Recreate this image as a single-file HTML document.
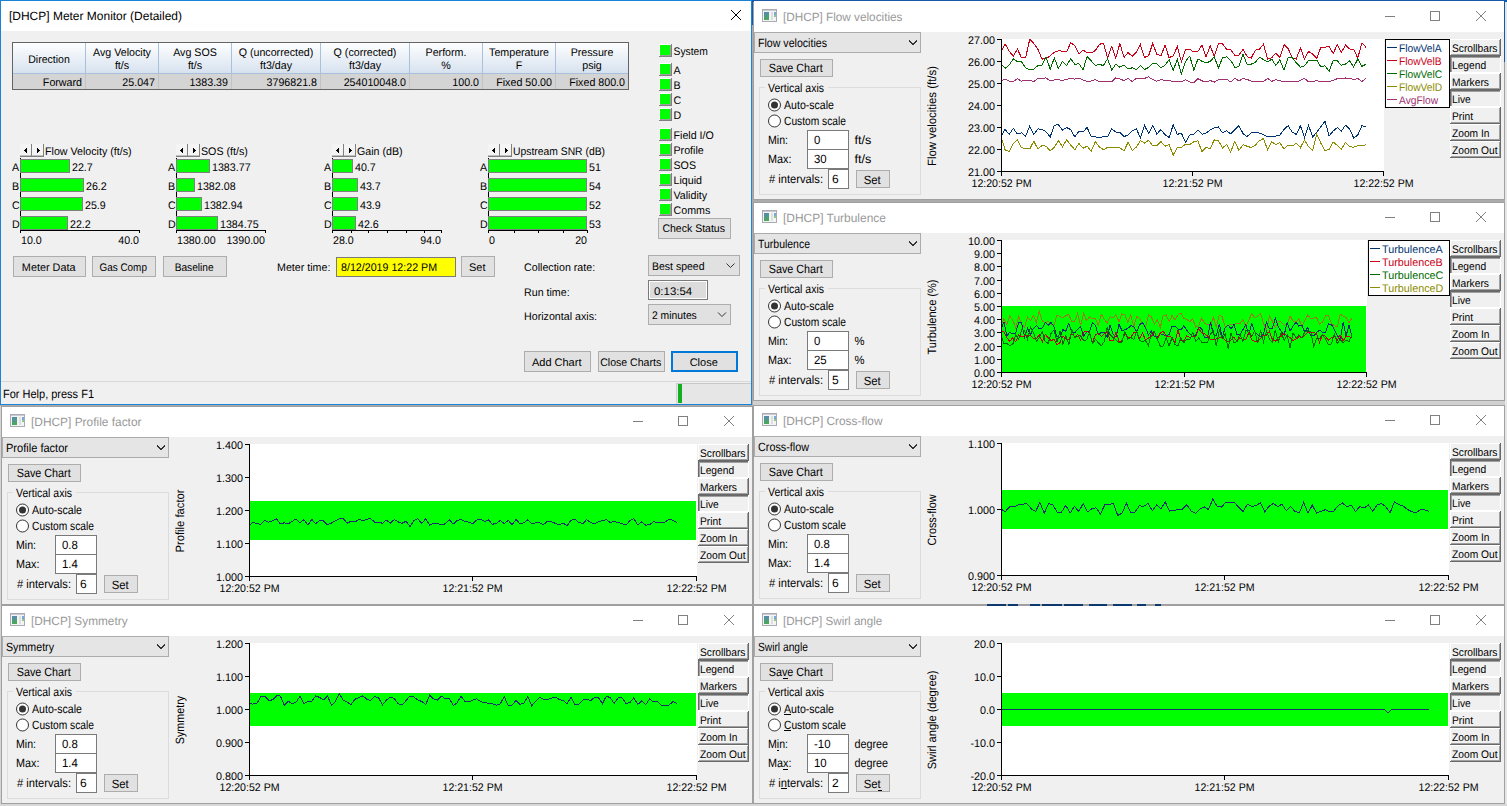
<!DOCTYPE html><html><head><meta charset="utf-8"><style>html,body{margin:0;padding:0;background:#c8c8c8;overflow:hidden}svg{display:block}text{font-family:"Liberation Sans",sans-serif;shape-rendering:auto}</style></head><body><svg width="1507" height="806" viewBox="0 0 1507 806" font-family="Liberation Sans, sans-serif" shape-rendering="crispEdges" text-rendering="geometricPrecision"><rect x="0" y="0" width="1507" height="806" fill="#ababab"/><rect x="1505" y="0" width="2" height="806" fill="#e6e6e6"/><rect x="753" y="401" width="752" height="4" fill="#d0d0d0"/><rect x="753" y="0" width="752" height="200" fill="#a0a0a0"/><rect x="752" y="0" width="755" height="2" fill="#155aa8"/><rect x="752" y="0" width="1" height="25" fill="#155aa8"/><rect x="1504" y="0" width="1" height="62" fill="#155aa8"/><rect x="754" y="1" width="750" height="198" fill="#f0f0f0"/><rect x="754" y="1" width="750" height="31" fill="#ffffff"/><rect x="762" y="9" width="15" height="13" fill="#f4f4f4"/><rect x="762.5" y="9.5" width="14" height="12" fill="none" stroke="#a8acb2" stroke-width="1"/><defs><linearGradient id="ig762_9" x1="0" y1="0" x2="0.3" y2="1"><stop offset="0" stop-color="#5b84bd"/><stop offset="1" stop-color="#4aa85a"/></linearGradient></defs><rect x="764" y="12" width="5" height="8" fill="url(#ig762_9)"/><rect x="771" y="12" width="2" height="8" fill="#dedede"/><rect x="774" y="12" width="2" height="3" fill="#7aa8d8"/><rect x="774" y="15" width="2" height="2" fill="#8cc88c"/><rect x="763" y="10" width="13" height="1" fill="#c8ccd2"/><text x="783" y="21" font-size="12" fill="#999999" text-anchor="start" textLength="119.4" lengthAdjust="spacingAndGlyphs">[DHCP] Flow velocities</text><rect x="1385" y="16" width="10" height="1" fill="#808080"/><rect x="1430.5" y="11.5" width="9" height="9" fill="none" stroke="#808080" stroke-width="1"/><path d="M1476 11 L1486 21 M1486 11 L1476 21" stroke="#808080" stroke-width="1" fill="none" shape-rendering="auto"/><rect x="754" y="32" width="167" height="21" fill="#e5e5e5"/><rect x="754.5" y="32.5" width="166" height="20" fill="none" stroke="#acacac" stroke-width="1"/><text x="758" y="47" font-size="12" fill="#000" text-anchor="start" textLength="69" lengthAdjust="spacingAndGlyphs">Flow velocities</text><path d="M909 40.5 L913 44.5 L917 40.5" fill="none" stroke="#333" stroke-width="1"/><rect x="760" y="59" width="73" height="18" fill="#e1e1e1"/><rect x="760.5" y="59.5" width="72" height="17" fill="none" stroke="#adadad" stroke-width="1"/><text x="795.7" y="72" font-size="12" fill="#000" text-anchor="middle" textLength="54" lengthAdjust="spacingAndGlyphs">Save Chart</text><rect x="759.5" y="87.5" width="161" height="107" fill="none" stroke="#dcdcdc" stroke-width="1"/><rect x="765" y="82" width="63" height="10" fill="#f0f0f0"/><text x="768" y="92" font-size="12" fill="#000" text-anchor="start" textLength="56" lengthAdjust="spacingAndGlyphs">Vertical axis</text><circle cx="774.5" cy="105" r="6" fill="#fff" stroke="#333" stroke-width="1" shape-rendering="auto"/><circle cx="774.5" cy="105" r="3.5" fill="#333" shape-rendering="auto"/><text x="784" y="108.5" font-size="12" fill="#000" text-anchor="start" textLength="50" lengthAdjust="spacingAndGlyphs">Auto-scale</text><circle cx="774.5" cy="121" r="6" fill="#fff" stroke="#333" stroke-width="1" shape-rendering="auto"/><text x="784" y="124.5" font-size="12" fill="#000" text-anchor="start" textLength="62" lengthAdjust="spacingAndGlyphs">Custom scale</text><text x="768" y="144" font-size="12" fill="#000" text-anchor="start" textLength="20" lengthAdjust="spacingAndGlyphs">Min:</text><text x="768" y="163" font-size="12" fill="#000" text-anchor="start" textLength="23.4" lengthAdjust="spacingAndGlyphs">Max:</text><rect x="807" y="130" width="42" height="20" fill="#fff"/><rect x="807.5" y="130.5" width="41" height="19" fill="none" stroke="#7a7a7a" stroke-width="1"/><rect x="807" y="149" width="42" height="20" fill="#fff"/><rect x="807.5" y="149.5" width="41" height="19" fill="none" stroke="#7a7a7a" stroke-width="1"/><text x="814" y="144" font-size="12" fill="#000" text-anchor="start" textLength="6.339765625" lengthAdjust="spacingAndGlyphs">0</text><text x="814" y="163" font-size="12" fill="#000" text-anchor="start" textLength="12.67953125" lengthAdjust="spacingAndGlyphs">30</text><text x="854.5" y="144" font-size="12" fill="#000" text-anchor="start" textLength="16.9" lengthAdjust="spacingAndGlyphs">ft/s</text><text x="854.5" y="163" font-size="12" fill="#000" text-anchor="start" textLength="16.9" lengthAdjust="spacingAndGlyphs">ft/s</text><text x="769" y="182.5" font-size="12" fill="#000" text-anchor="start" textLength="54" lengthAdjust="spacingAndGlyphs"># intervals:</text><rect x="828" y="169" width="21" height="20" fill="#fff"/><rect x="828.5" y="169.5" width="20" height="19" fill="none" stroke="#7a7a7a" stroke-width="1"/><text x="832" y="183" font-size="12" fill="#000" text-anchor="start">6</text><rect x="856" y="170" width="34" height="18" fill="#e1e1e1"/><rect x="856.5" y="170.5" width="33" height="17" fill="none" stroke="#adadad" stroke-width="1"/><text x="872.2" y="183.5" font-size="12" fill="#000" text-anchor="middle" textLength="17" lengthAdjust="spacingAndGlyphs">Set</text><text x="0" y="0" font-size="12" fill="#000" text-anchor="middle" textLength="100" lengthAdjust="spacingAndGlyphs" transform="translate(935.5,116) rotate(-90)">Flow velocities (ft/s)</text><rect x="1001" y="39" width="383" height="132" fill="#ffffff"/><rect x="997" y="39" width="4" height="1" fill="#000"/><text x="995" y="44" font-size="11" fill="#000" text-anchor="end" textLength="26.9745" lengthAdjust="spacingAndGlyphs">27.00</text><rect x="997" y="61" width="4" height="1" fill="#000"/><text x="995" y="66" font-size="11" fill="#000" text-anchor="end" textLength="26.9745" lengthAdjust="spacingAndGlyphs">26.00</text><rect x="997" y="83" width="4" height="1" fill="#000"/><text x="995" y="88" font-size="11" fill="#000" text-anchor="end" textLength="26.9745" lengthAdjust="spacingAndGlyphs">25.00</text><rect x="997" y="105" width="4" height="1" fill="#000"/><text x="995" y="110" font-size="11" fill="#000" text-anchor="end" textLength="26.9745" lengthAdjust="spacingAndGlyphs">24.00</text><rect x="997" y="127" width="4" height="1" fill="#000"/><text x="995" y="132" font-size="11" fill="#000" text-anchor="end" textLength="26.9745" lengthAdjust="spacingAndGlyphs">23.00</text><rect x="997" y="149" width="4" height="1" fill="#000"/><text x="995" y="154" font-size="11" fill="#000" text-anchor="end" textLength="26.9745" lengthAdjust="spacingAndGlyphs">22.00</text><rect x="997" y="171" width="4" height="1" fill="#000"/><text x="995" y="176" font-size="11" fill="#000" text-anchor="end" textLength="26.9745" lengthAdjust="spacingAndGlyphs">21.00</text><polyline points="1001.0,51.9 1005.1,44.1 1009.2,51.0 1013.3,56.3 1017.4,49.0 1021.5,57.8 1025.6,57.9 1029.7,39.4 1033.8,43.4 1037.9,49.2 1042.0,59.1 1046.1,58.4 1050.2,56.0 1054.3,52.1 1058.4,50.8 1062.5,51.1 1066.6,51.8 1070.7,42.9 1074.8,45.5 1078.9,54.1 1083.0,49.9 1087.1,52.7 1091.2,53.0 1095.3,50.5 1099.4,44.3 1103.5,43.2 1107.6,58.1 1111.7,46.5 1115.8,57.9 1119.9,43.4 1124.0,57.4 1128.1,52.5 1132.2,56.4 1136.3,52.0 1140.4,44.7 1144.5,57.4 1148.6,55.8 1152.7,43.3 1156.8,54.3 1160.9,55.9 1165.0,45.3 1169.1,57.7 1173.2,55.8 1177.3,46.6 1181.4,61.7 1185.6,49.7 1189.7,49.4 1193.8,51.9 1197.9,51.4 1202.0,45.1 1206.1,56.8 1210.2,45.9 1214.3,56.2 1218.4,43.8 1222.5,43.7 1226.6,49.4 1230.7,49.5 1234.8,55.4 1238.9,55.1 1243.0,49.5 1247.1,56.5 1251.2,58.2 1255.3,50.1 1259.4,49.2 1263.5,44.2 1267.6,59.1 1271.7,57.7 1275.8,53.3 1279.9,57.2 1284.0,44.6 1288.1,48.5 1292.2,57.9 1296.3,59.1 1300.4,47.8 1304.5,59.0 1308.6,51.4 1312.7,54.1 1316.8,58.1 1320.9,47.2 1325.0,47.2 1329.1,46.3 1333.2,53.5 1337.3,44.5 1341.4,52.5 1345.5,45.1 1349.6,49.0 1353.7,49.7 1357.8,58.0 1361.9,43.0 1366.0,47.3" fill="none" stroke="#c80018" stroke-width="1" stroke-linejoin="miter"/><polyline points="1001.0,63.6 1005.1,68.4 1009.2,65.0 1013.3,58.8 1017.4,61.7 1021.5,61.8 1025.6,68.0 1029.7,69.5 1033.8,69.3 1037.9,65.5 1042.0,65.1 1046.1,57.3 1050.2,69.0 1054.3,58.0 1058.4,68.4 1062.5,61.5 1066.6,65.4 1070.7,58.7 1074.8,64.4 1078.9,63.5 1083.0,69.9 1087.1,56.5 1091.2,60.9 1095.3,65.2 1099.4,64.8 1103.5,65.2 1107.6,58.8 1111.7,69.9 1115.8,64.2 1119.9,67.2 1124.0,64.8 1128.1,68.9 1132.2,67.8 1136.3,69.8 1140.4,65.4 1144.5,69.6 1148.6,67.4 1152.7,63.5 1156.8,63.5 1160.9,68.0 1165.0,65.1 1169.1,59.6 1173.2,70.3 1177.3,59.3 1181.4,74.0 1185.6,61.5 1189.7,56.1 1193.8,70.0 1197.9,59.1 1202.0,61.2 1206.1,62.8 1210.2,61.4 1214.3,56.8 1218.4,68.0 1222.5,57.9 1226.6,56.9 1230.7,60.4 1234.8,67.3 1238.9,66.7 1243.0,54.5 1247.1,64.3 1251.2,64.1 1255.3,62.3 1259.4,57.2 1263.5,59.5 1267.6,61.9 1271.7,59.1 1275.8,65.4 1279.9,59.8 1284.0,70.1 1288.1,57.4 1292.2,57.5 1296.3,62.7 1300.4,67.2 1304.5,65.9 1308.6,60.5 1312.7,60.9 1316.8,60.3 1320.9,66.8 1325.0,65.7 1329.1,71.2 1333.2,60.4 1337.3,60.9 1341.4,65.3 1345.5,64.0 1349.6,60.8 1353.7,66.9 1357.8,59.0 1361.9,66.4 1366.0,64.2" fill="none" stroke="#006a00" stroke-width="1" stroke-linejoin="miter"/><polyline points="1001.0,81.0 1005.1,79.1 1009.2,81.3 1013.3,81.5 1017.4,78.8 1021.5,81.2 1025.6,80.2 1029.7,80.4 1033.8,81.5 1037.9,78.6 1042.0,78.5 1046.1,77.9 1050.2,81.0 1054.3,80.0 1058.4,79.6 1062.5,80.5 1066.6,79.3 1070.7,78.6 1074.8,79.1 1078.9,78.0 1083.0,80.2 1087.1,81.2 1091.2,81.0 1095.3,79.5 1099.4,81.5 1103.5,81.1 1107.6,81.3 1111.7,81.8 1115.8,77.9 1119.9,79.0 1124.0,80.6 1128.1,78.4 1132.2,81.4 1136.3,78.3 1140.4,78.6 1144.5,78.4 1148.6,76.9 1152.7,79.5 1156.8,81.2 1160.9,79.6 1165.0,80.5 1169.1,80.6 1173.2,81.4 1177.3,81.6 1181.4,81.8 1185.6,79.7 1189.7,81.9 1193.8,82.8 1197.9,78.6 1202.0,80.9 1206.1,81.8 1210.2,80.5 1214.3,82.1 1218.4,79.9 1222.5,79.8 1226.6,79.2 1230.7,82.0 1234.8,78.1 1238.9,81.0 1243.0,78.4 1247.1,79.5 1251.2,81.0 1255.3,81.2 1259.4,82.0 1263.5,81.7 1267.6,78.3 1271.7,81.3 1275.8,79.7 1279.9,80.8 1284.0,81.5 1288.1,81.6 1292.2,81.2 1296.3,82.0 1300.4,80.5 1304.5,78.3 1308.6,81.9 1312.7,81.6 1316.8,80.7 1320.9,81.9 1325.0,81.0 1329.1,81.5 1333.2,80.5 1337.3,78.6 1341.4,79.0 1345.5,78.0 1349.6,78.1 1353.7,79.6 1357.8,78.4 1361.9,81.5 1366.0,78.5" fill="none" stroke="#a03070" stroke-width="1" stroke-linejoin="miter"/><polyline points="1001.0,136.6 1005.1,129.4 1009.2,134.4 1013.3,128.3 1017.4,134.0 1021.5,132.8 1025.6,136.4 1029.7,126.1 1033.8,134.6 1037.9,128.9 1042.0,129.2 1046.1,131.9 1050.2,136.9 1054.3,125.1 1058.4,124.9 1062.5,130.0 1066.6,127.6 1070.7,129.6 1074.8,136.8 1078.9,131.2 1083.0,132.0 1087.1,127.5 1091.2,136.6 1095.3,136.8 1099.4,137.6 1103.5,136.5 1107.6,136.8 1111.7,129.0 1115.8,132.0 1119.9,132.2 1124.0,136.7 1128.1,134.9 1132.2,131.1 1136.3,128.7 1140.4,137.7 1144.5,125.5 1148.6,133.4 1152.7,125.6 1156.8,134.0 1160.9,129.7 1165.0,134.6 1169.1,137.5 1173.2,125.0 1177.3,134.3 1181.4,133.3 1185.6,142.2 1189.7,135.0 1193.8,134.5 1197.9,130.0 1202.0,134.2 1206.1,133.1 1210.2,130.1 1214.3,128.0 1218.4,126.9 1222.5,132.9 1226.6,130.8 1230.7,133.8 1234.8,129.9 1238.9,125.7 1243.0,133.5 1247.1,136.6 1251.2,132.6 1255.3,132.1 1259.4,133.0 1263.5,134.6 1267.6,136.7 1271.7,136.1 1275.8,136.1 1279.9,135.1 1284.0,129.3 1288.1,125.7 1292.2,132.1 1296.3,134.5 1300.4,125.7 1304.5,137.2 1308.6,125.7 1312.7,136.7 1316.8,132.4 1320.9,126.5 1325.0,121.2 1329.1,135.8 1333.2,131.0 1337.3,127.6 1341.4,131.0 1345.5,125.2 1349.6,129.0 1353.7,138.0 1357.8,134.9 1361.9,125.7 1366.0,126.7" fill="none" stroke="#003370" stroke-width="1" stroke-linejoin="miter"/><polyline points="1001.0,137.0 1005.1,149.8 1009.2,151.5 1013.3,143.5 1017.4,139.7 1021.5,147.7 1025.6,148.4 1029.7,149.0 1033.8,141.2 1037.9,149.0 1042.0,145.6 1046.1,146.2 1050.2,150.8 1054.3,147.4 1058.4,140.5 1062.5,146.8 1066.6,139.7 1070.7,145.1 1074.8,149.7 1078.9,143.4 1083.0,148.3 1087.1,146.1 1091.2,151.2 1095.3,141.6 1099.4,146.9 1103.5,149.6 1107.6,147.5 1111.7,148.0 1115.8,147.9 1119.9,147.7 1124.0,150.9 1128.1,142.1 1132.2,150.4 1136.3,147.2 1140.4,140.5 1144.5,143.1 1148.6,140.3 1152.7,145.7 1156.8,145.7 1160.9,141.5 1165.0,146.2 1169.1,144.6 1173.2,155.1 1177.3,147.7 1181.4,147.2 1185.6,144.3 1189.7,144.5 1193.8,141.8 1197.9,140.9 1202.0,151.6 1206.1,147.5 1210.2,148.8 1214.3,139.8 1218.4,140.7 1222.5,147.9 1226.6,144.4 1230.7,152.0 1234.8,141.3 1238.9,150.4 1243.0,144.8 1247.1,146.2 1251.2,147.6 1255.3,145.1 1259.4,140.8 1263.5,138.5 1267.6,149.9 1271.7,141.6 1275.8,144.7 1279.9,142.7 1284.0,148.9 1288.1,145.1 1292.2,146.1 1296.3,143.2 1300.4,147.7 1304.5,139.8 1308.6,146.8 1312.7,150.2 1316.8,134.2 1320.9,143.3 1325.0,150.5 1329.1,149.3 1333.2,142.1 1337.3,145.3 1341.4,149.0 1345.5,142.4 1349.6,146.7 1353.7,147.2 1357.8,145.7 1361.9,146.0 1366.0,144.5" fill="none" stroke="#8c8c00" stroke-width="1" stroke-linejoin="miter"/><rect x="1001" y="39" width="1" height="137" fill="#000"/><rect x="1001" y="171" width="383" height="1" fill="#000"/><rect x="1192" y="171" width="1" height="5" fill="#000"/><rect x="1383" y="171" width="1" height="5" fill="#000"/><text x="1001.5" y="187" font-size="11" fill="#000" text-anchor="middle" textLength="60" lengthAdjust="spacingAndGlyphs">12:20:52 PM</text><text x="1192.5" y="187" font-size="11" fill="#000" text-anchor="middle" textLength="60" lengthAdjust="spacingAndGlyphs">12:21:52 PM</text><text x="1383.5" y="187" font-size="11" fill="#000" text-anchor="middle" textLength="60" lengthAdjust="spacingAndGlyphs">12:22:52 PM</text><rect x="1385" y="39" width="65" height="69" fill="#ffffff"/><rect x="1385.5" y="39.5" width="64" height="68" fill="none" stroke="#000" stroke-width="1"/><rect x="1387" y="47" width="10" height="1" fill="#003370"/><text x="1399" y="51.5" font-size="11" fill="#003370" text-anchor="start" textLength="42.64340625" lengthAdjust="spacingAndGlyphs">FlowVelA</text><rect x="1387" y="60" width="10" height="1" fill="#c80018"/><text x="1399" y="64.5" font-size="11" fill="#c80018" text-anchor="start" textLength="42.64340625" lengthAdjust="spacingAndGlyphs">FlowVelB</text><rect x="1387" y="73" width="10" height="1" fill="#006a00"/><text x="1399" y="77.5" font-size="11" fill="#006a00" text-anchor="start" textLength="43.20721875" lengthAdjust="spacingAndGlyphs">FlowVelC</text><rect x="1387" y="86" width="10" height="1" fill="#8c8c00"/><text x="1399" y="90.5" font-size="11" fill="#8c8c00" text-anchor="start" textLength="43.20721875" lengthAdjust="spacingAndGlyphs">FlowVelD</text><rect x="1387" y="99" width="10" height="1" fill="#a03070"/><text x="1399" y="103.5" font-size="11" fill="#a03070" text-anchor="start" textLength="39.041109375" lengthAdjust="spacingAndGlyphs">AvgFlow</text><rect x="1450" y="39" width="51" height="17" fill="#f0f0f0"/><rect x="1450" y="39" width="51" height="1" fill="#ffffff"/><rect x="1450" y="39" width="1" height="17" fill="#ffffff"/><rect x="1450" y="55" width="51" height="1" fill="#696969"/><rect x="1500" y="39" width="1" height="17" fill="#696969"/><rect x="1451" y="54" width="49" height="1" fill="#a0a0a0"/><rect x="1499" y="40" width="1" height="15" fill="#a0a0a0"/><text x="1452" y="51.5" font-size="11" fill="#000" text-anchor="start" textLength="45.478453125" lengthAdjust="spacingAndGlyphs">Scrollbars</text><rect x="1450" y="56" width="51" height="17" fill="#f0f0f0"/><rect x="1450" y="56" width="51" height="1" fill="#696969"/><rect x="1450" y="56" width="1" height="17" fill="#696969"/><rect x="1451" y="57" width="49" height="1" fill="#a0a0a0"/><rect x="1451" y="57" width="1" height="15" fill="#a0a0a0"/><rect x="1450" y="72" width="51" height="1" fill="#ffffff"/><rect x="1500" y="56" width="1" height="17" fill="#ffffff"/><text x="1452" y="68.5" font-size="11" fill="#000" text-anchor="start" textLength="34.13390625" lengthAdjust="spacingAndGlyphs">Legend</text><rect x="1450" y="73" width="51" height="17" fill="#f0f0f0"/><rect x="1450" y="73" width="51" height="1" fill="#ffffff"/><rect x="1450" y="73" width="1" height="17" fill="#ffffff"/><rect x="1450" y="89" width="51" height="1" fill="#696969"/><rect x="1500" y="73" width="1" height="17" fill="#696969"/><rect x="1451" y="88" width="49" height="1" fill="#a0a0a0"/><rect x="1499" y="74" width="1" height="15" fill="#a0a0a0"/><text x="1452" y="85.5" font-size="11" fill="#000" text-anchor="start" textLength="36.94134375" lengthAdjust="spacingAndGlyphs">Markers</text><rect x="1450" y="90" width="51" height="17" fill="#f0f0f0"/><rect x="1450" y="90" width="51" height="1" fill="#696969"/><rect x="1450" y="90" width="1" height="17" fill="#696969"/><rect x="1451" y="91" width="49" height="1" fill="#a0a0a0"/><rect x="1451" y="91" width="1" height="15" fill="#a0a0a0"/><rect x="1450" y="106" width="51" height="1" fill="#ffffff"/><rect x="1500" y="90" width="1" height="17" fill="#ffffff"/><text x="1452" y="102.5" font-size="11" fill="#000" text-anchor="start" textLength="18.765656250000003" lengthAdjust="spacingAndGlyphs">Live</text><rect x="1450" y="107" width="51" height="17" fill="#f0f0f0"/><rect x="1450" y="107" width="51" height="1" fill="#ffffff"/><rect x="1450" y="107" width="1" height="17" fill="#ffffff"/><rect x="1450" y="123" width="51" height="1" fill="#696969"/><rect x="1500" y="107" width="1" height="17" fill="#696969"/><rect x="1451" y="122" width="49" height="1" fill="#a0a0a0"/><rect x="1499" y="108" width="1" height="15" fill="#a0a0a0"/><text x="1452" y="119.5" font-size="11" fill="#000" text-anchor="start" textLength="21.033984375000003" lengthAdjust="spacingAndGlyphs">Print</text><rect x="1450" y="124" width="51" height="17" fill="#f0f0f0"/><rect x="1450" y="124" width="51" height="1" fill="#ffffff"/><rect x="1450" y="124" width="1" height="17" fill="#ffffff"/><rect x="1450" y="140" width="51" height="1" fill="#696969"/><rect x="1500" y="124" width="1" height="17" fill="#696969"/><rect x="1451" y="139" width="49" height="1" fill="#a0a0a0"/><rect x="1499" y="125" width="1" height="15" fill="#a0a0a0"/><text x="1452" y="136.5" font-size="11" fill="#000" text-anchor="start" textLength="37.521140625" lengthAdjust="spacingAndGlyphs">Zoom In</text><rect x="1450" y="141" width="51" height="17" fill="#f0f0f0"/><rect x="1450" y="141" width="51" height="1" fill="#ffffff"/><rect x="1450" y="141" width="1" height="17" fill="#ffffff"/><rect x="1450" y="157" width="51" height="1" fill="#696969"/><rect x="1500" y="141" width="1" height="17" fill="#696969"/><rect x="1451" y="156" width="49" height="1" fill="#a0a0a0"/><rect x="1499" y="142" width="1" height="15" fill="#a0a0a0"/><text x="1452" y="153.5" font-size="11" fill="#000" text-anchor="start" textLength="45.478453125" lengthAdjust="spacingAndGlyphs">Zoom Out</text><rect x="753" y="202" width="752" height="199" fill="#a0a0a0"/><rect x="754" y="203" width="750" height="197" fill="#f0f0f0"/><rect x="754" y="203" width="750" height="30" fill="#ffffff"/><rect x="762" y="210" width="15" height="13" fill="#f4f4f4"/><rect x="762.5" y="210.5" width="14" height="12" fill="none" stroke="#a8acb2" stroke-width="1"/><defs><linearGradient id="ig762_210" x1="0" y1="0" x2="0.3" y2="1"><stop offset="0" stop-color="#5b84bd"/><stop offset="1" stop-color="#4aa85a"/></linearGradient></defs><rect x="764" y="213" width="5" height="8" fill="url(#ig762_210)"/><rect x="771" y="213" width="2" height="8" fill="#dedede"/><rect x="774" y="213" width="2" height="3" fill="#7aa8d8"/><rect x="774" y="216" width="2" height="2" fill="#8cc88c"/><rect x="763" y="211" width="13" height="1" fill="#c8ccd2"/><text x="783" y="222" font-size="12" fill="#999999" text-anchor="start" textLength="102.9" lengthAdjust="spacingAndGlyphs">[DHCP] Turbulence</text><rect x="1385" y="217" width="10" height="1" fill="#808080"/><rect x="1430.5" y="212.5" width="9" height="9" fill="none" stroke="#808080" stroke-width="1"/><path d="M1476 212 L1486 222 M1486 212 L1476 222" stroke="#808080" stroke-width="1" fill="none" shape-rendering="auto"/><rect x="754" y="233" width="167" height="21" fill="#e5e5e5"/><rect x="754.5" y="233.5" width="166" height="20" fill="none" stroke="#acacac" stroke-width="1"/><text x="758" y="248" font-size="12" fill="#000" text-anchor="start" textLength="52" lengthAdjust="spacingAndGlyphs">Turbulence</text><path d="M909 241.5 L913 245.5 L917 241.5" fill="none" stroke="#333" stroke-width="1"/><rect x="760" y="260" width="73" height="18" fill="#e1e1e1"/><rect x="760.5" y="260.5" width="72" height="17" fill="none" stroke="#adadad" stroke-width="1"/><text x="795.7" y="273" font-size="12" fill="#000" text-anchor="middle" textLength="54" lengthAdjust="spacingAndGlyphs">Save Chart</text><rect x="759.5" y="288.5" width="161" height="107" fill="none" stroke="#dcdcdc" stroke-width="1"/><rect x="765" y="283" width="63" height="10" fill="#f0f0f0"/><text x="768" y="293" font-size="12" fill="#000" text-anchor="start" textLength="56" lengthAdjust="spacingAndGlyphs">Vertical axis</text><circle cx="774.5" cy="306" r="6" fill="#fff" stroke="#333" stroke-width="1" shape-rendering="auto"/><circle cx="774.5" cy="306" r="3.5" fill="#333" shape-rendering="auto"/><text x="784" y="309.5" font-size="12" fill="#000" text-anchor="start" textLength="50" lengthAdjust="spacingAndGlyphs">Auto-scale</text><circle cx="774.5" cy="322" r="6" fill="#fff" stroke="#333" stroke-width="1" shape-rendering="auto"/><text x="784" y="325.5" font-size="12" fill="#000" text-anchor="start" textLength="62" lengthAdjust="spacingAndGlyphs">Custom scale</text><text x="768" y="345" font-size="12" fill="#000" text-anchor="start" textLength="20" lengthAdjust="spacingAndGlyphs">Min:</text><text x="768" y="364" font-size="12" fill="#000" text-anchor="start" textLength="23.4" lengthAdjust="spacingAndGlyphs">Max:</text><rect x="807" y="331" width="42" height="20" fill="#fff"/><rect x="807.5" y="331.5" width="41" height="19" fill="none" stroke="#7a7a7a" stroke-width="1"/><rect x="807" y="350" width="42" height="20" fill="#fff"/><rect x="807.5" y="350.5" width="41" height="19" fill="none" stroke="#7a7a7a" stroke-width="1"/><text x="814" y="345" font-size="12" fill="#000" text-anchor="start" textLength="6.339765625" lengthAdjust="spacingAndGlyphs">0</text><text x="814" y="364" font-size="12" fill="#000" text-anchor="start" textLength="12.67953125" lengthAdjust="spacingAndGlyphs">25</text><text x="854.5" y="345" font-size="12" fill="#000" text-anchor="start" textLength="10" lengthAdjust="spacingAndGlyphs">%</text><text x="854.5" y="364" font-size="12" fill="#000" text-anchor="start" textLength="10" lengthAdjust="spacingAndGlyphs">%</text><text x="769" y="383.5" font-size="12" fill="#000" text-anchor="start" textLength="54" lengthAdjust="spacingAndGlyphs"># intervals:</text><rect x="828" y="370" width="21" height="20" fill="#fff"/><rect x="828.5" y="370.5" width="20" height="19" fill="none" stroke="#7a7a7a" stroke-width="1"/><text x="832" y="384" font-size="12" fill="#000" text-anchor="start">5</text><rect x="856" y="371" width="34" height="18" fill="#e1e1e1"/><rect x="856.5" y="371.5" width="33" height="17" fill="none" stroke="#adadad" stroke-width="1"/><text x="872.2" y="384.5" font-size="12" fill="#000" text-anchor="middle" textLength="17" lengthAdjust="spacingAndGlyphs">Set</text><text x="0" y="0" font-size="12" fill="#000" text-anchor="middle" textLength="75" lengthAdjust="spacingAndGlyphs" transform="translate(935.5,317) rotate(-90)">Turbulence (%)</text><rect x="1001" y="240" width="366" height="132" fill="#ffffff"/><rect x="1001" y="306" width="365" height="66" fill="#00ff00"/><rect x="997" y="240" width="4" height="1" fill="#000"/><text x="995" y="245" font-size="11" fill="#000" text-anchor="end" textLength="26.9745" lengthAdjust="spacingAndGlyphs">10.00</text><rect x="997" y="253" width="4" height="1" fill="#000"/><text x="995" y="258" font-size="11" fill="#000" text-anchor="end" textLength="20.979656249999998" lengthAdjust="spacingAndGlyphs">9.00</text><rect x="997" y="266" width="4" height="1" fill="#000"/><text x="995" y="271" font-size="11" fill="#000" text-anchor="end" textLength="20.979656249999998" lengthAdjust="spacingAndGlyphs">8.00</text><rect x="997" y="280" width="4" height="1" fill="#000"/><text x="995" y="285" font-size="11" fill="#000" text-anchor="end" textLength="20.979656249999998" lengthAdjust="spacingAndGlyphs">7.00</text><rect x="997" y="293" width="4" height="1" fill="#000"/><text x="995" y="298" font-size="11" fill="#000" text-anchor="end" textLength="20.979656249999998" lengthAdjust="spacingAndGlyphs">6.00</text><rect x="997" y="306" width="4" height="1" fill="#000"/><text x="995" y="311" font-size="11" fill="#000" text-anchor="end" textLength="20.979656249999998" lengthAdjust="spacingAndGlyphs">5.00</text><rect x="997" y="319" width="4" height="1" fill="#000"/><text x="995" y="324" font-size="11" fill="#000" text-anchor="end" textLength="20.979656249999998" lengthAdjust="spacingAndGlyphs">4.00</text><rect x="997" y="332" width="4" height="1" fill="#000"/><text x="995" y="337" font-size="11" fill="#000" text-anchor="end" textLength="20.979656249999998" lengthAdjust="spacingAndGlyphs">3.00</text><rect x="997" y="346" width="4" height="1" fill="#000"/><text x="995" y="351" font-size="11" fill="#000" text-anchor="end" textLength="20.979656249999998" lengthAdjust="spacingAndGlyphs">2.00</text><rect x="997" y="359" width="4" height="1" fill="#000"/><text x="995" y="364" font-size="11" fill="#000" text-anchor="end" textLength="20.979656249999998" lengthAdjust="spacingAndGlyphs">1.00</text><rect x="997" y="372" width="4" height="1" fill="#000"/><text x="995" y="377" font-size="11" fill="#000" text-anchor="end" textLength="20.979656249999998" lengthAdjust="spacingAndGlyphs">0.00</text><polyline points="1001.0,325.4 1003.9,318.6 1006.9,324.6 1009.8,316.0 1012.8,320.4 1015.7,327.7 1018.7,316.2 1021.6,324.4 1024.6,327.2 1027.5,317.1 1030.5,320.6 1033.4,315.8 1036.4,322.4 1039.3,311.4 1042.3,321.2 1045.2,322.8 1048.2,321.2 1051.1,324.4 1054.1,324.8 1057.0,314.8 1060.0,316.7 1062.9,317.4 1065.9,315.8 1068.8,314.4 1071.8,321.8 1074.7,321.2 1077.7,313.3 1080.6,325.1 1083.6,313.4 1086.5,320.6 1089.5,316.9 1092.4,318.9 1095.4,318.7 1098.3,325.3 1101.3,314.3 1104.2,319.1 1107.2,323.0 1110.1,316.5 1113.1,317.9 1116.0,314.7 1119.0,321.9 1121.9,313.8 1124.9,315.0 1127.8,322.3 1130.8,315.1 1133.7,326.8 1136.7,316.5 1139.6,318.2 1142.6,323.6 1145.5,327.0 1148.5,314.7 1151.4,317.0 1154.4,324.1 1157.3,320.1 1160.3,327.4 1163.2,315.6 1166.2,315.0 1169.1,321.6 1172.1,315.4 1175.0,320.0 1178.0,314.7 1180.9,312.9 1183.9,318.4 1186.8,319.3 1189.8,321.9 1192.7,318.9 1195.7,327.0 1198.6,325.7 1201.6,317.9 1204.5,323.1 1207.5,324.6 1210.4,325.1 1213.4,317.5 1216.3,327.1 1219.3,315.1 1222.2,316.7 1225.2,326.9 1228.1,325.2 1231.1,324.1 1234.0,324.4 1237.0,323.3 1239.9,323.5 1242.9,319.8 1245.8,326.3 1248.8,320.4 1251.7,313.7 1254.7,317.6 1257.6,316.3 1260.6,313.6 1263.5,323.2 1266.5,330.7 1269.4,316.0 1272.4,321.3 1275.3,327.5 1278.3,321.4 1281.2,322.1 1284.2,325.2 1287.1,324.2 1290.1,315.9 1293.0,321.2 1296.0,322.2 1298.9,318.6 1301.9,326.5 1304.8,320.6 1307.8,314.9 1310.7,318.7 1313.7,318.1 1316.6,317.6 1319.6,324.2 1322.5,322.2 1325.5,315.8 1328.4,315.4 1331.4,323.3 1334.3,325.7 1337.3,326.6 1340.2,314.1 1343.2,316.3 1346.1,317.6 1349.1,322.9 1352.0,317.9" fill="none" stroke="#9a7a1a" stroke-width="1" stroke-linejoin="miter"/><polyline points="1001.0,330.0 1003.9,321.9 1006.9,335.8 1009.8,332.2 1012.8,334.0 1015.7,332.6 1018.7,322.9 1021.6,323.0 1024.6,336.9 1027.5,328.3 1030.5,334.7 1033.4,328.4 1036.4,325.4 1039.3,328.7 1042.3,328.0 1045.2,322.5 1048.2,325.3 1051.1,322.2 1054.1,327.1 1057.0,336.9 1060.0,337.2 1062.9,329.7 1065.9,331.2 1068.8,323.2 1071.8,331.8 1074.7,333.0 1077.7,329.1 1080.6,327.0 1083.6,336.3 1086.5,332.0 1089.5,331.3 1092.4,322.6 1095.4,325.1 1098.3,335.0 1101.3,332.1 1104.2,332.0 1107.2,337.1 1110.1,325.1 1113.1,334.5 1116.0,336.9 1119.0,324.6 1121.9,330.4 1124.9,329.8 1127.8,328.4 1130.8,325.9 1133.7,326.2 1136.7,332.1 1139.6,324.7 1142.6,322.7 1145.5,327.6 1148.5,335.0 1151.4,330.8 1154.4,337.0 1157.3,336.6 1160.3,333.6 1163.2,334.8 1166.2,336.1 1169.1,334.4 1172.1,326.0 1175.0,326.4 1178.0,328.9 1180.9,329.9 1183.9,325.8 1186.8,330.3 1189.8,334.0 1192.7,336.6 1195.7,335.2 1198.6,327.5 1201.6,328.3 1204.5,337.2 1207.5,337.6 1210.4,322.1 1213.4,334.0 1216.3,335.5 1219.3,324.0 1222.2,337.5 1225.2,327.5 1228.1,325.0 1231.1,328.9 1234.0,324.2 1237.0,334.7 1239.9,335.2 1242.9,329.6 1245.8,324.7 1248.8,334.7 1251.7,323.8 1254.7,331.6 1257.6,334.6 1260.6,336.9 1263.5,333.9 1266.5,322.3 1269.4,328.8 1272.4,328.2 1275.3,318.4 1278.3,326.8 1281.2,331.5 1284.2,334.9 1287.1,322.8 1290.1,331.2 1293.0,326.0 1296.0,322.3 1298.9,326.2 1301.9,325.0 1304.8,332.6 1307.8,327.2 1310.7,335.9 1313.7,336.0 1316.6,332.4 1319.6,330.1 1322.5,332.1 1325.5,332.8 1328.4,323.8 1331.4,324.6 1334.3,329.5 1337.3,335.6 1340.2,339.9 1343.2,321.9 1346.1,335.9 1349.1,325.0 1352.0,336.6" fill="none" stroke="#003370" stroke-width="1" stroke-linejoin="miter"/><polyline points="1001.0,332.0 1003.9,331.4 1006.9,337.9 1009.8,341.4 1012.8,337.7 1015.7,341.9 1018.7,334.5 1021.6,336.9 1024.6,335.7 1027.5,336.0 1030.5,335.6 1033.4,338.7 1036.4,338.6 1039.3,335.1 1042.3,341.9 1045.2,334.4 1048.2,337.6 1051.1,340.8 1054.1,339.1 1057.0,344.9 1060.0,342.5 1062.9,336.2 1065.9,339.0 1068.8,339.5 1071.8,333.7 1074.7,336.9 1077.7,334.6 1080.6,340.1 1083.6,332.0 1086.5,331.7 1089.5,332.3 1092.4,342.7 1095.4,334.8 1098.3,333.4 1101.3,336.6 1104.2,334.1 1107.2,331.4 1110.1,341.0 1113.1,340.6 1116.0,331.7 1119.0,341.7 1121.9,340.9 1124.9,333.3 1127.8,337.9 1130.8,337.7 1133.7,332.4 1136.7,332.3 1139.6,338.1 1142.6,333.1 1145.5,340.1 1148.5,338.1 1151.4,336.3 1154.4,331.8 1157.3,339.0 1160.3,333.0 1163.2,331.0 1166.2,336.5 1169.1,336.3 1172.1,337.6 1175.0,342.9 1178.0,329.7 1180.9,340.5 1183.9,340.9 1186.8,335.8 1189.8,337.3 1192.7,336.6 1195.7,336.7 1198.6,328.3 1201.6,332.7 1204.5,333.7 1207.5,335.8 1210.4,339.2 1213.4,339.4 1216.3,338.9 1219.3,338.0 1222.2,337.3 1225.2,339.9 1228.1,341.9 1231.1,339.8 1234.0,337.4 1237.0,341.5 1239.9,337.7 1242.9,339.9 1245.8,340.0 1248.8,332.2 1251.7,339.7 1254.7,341.2 1257.6,341.9 1260.6,338.3 1263.5,335.1 1266.5,335.2 1269.4,331.4 1272.4,339.6 1275.3,341.3 1278.3,337.4 1281.2,336.2 1284.2,333.2 1287.1,335.9 1290.1,337.6 1293.0,340.5 1296.0,339.2 1298.9,336.6 1301.9,337.8 1304.8,335.2 1307.8,332.0 1310.7,332.4 1313.7,332.6 1316.6,333.8 1319.6,342.5 1322.5,334.4 1325.5,336.6 1328.4,340.1 1331.4,337.9 1334.3,336.0 1337.3,340.0 1340.2,335.0 1343.2,340.9 1346.1,336.1 1349.1,336.6 1352.0,337.9" fill="none" stroke="#c80018" stroke-width="1" stroke-linejoin="miter"/><polyline points="1001.0,334.7 1003.9,343.8 1006.9,343.6 1009.8,345.3 1012.8,344.3 1015.7,334.5 1018.7,339.3 1021.6,329.7 1024.6,330.5 1027.5,339.3 1030.5,327.1 1033.4,332.4 1036.4,341.3 1039.3,337.6 1042.3,331.6 1045.2,341.5 1048.2,343.5 1051.1,333.2 1054.1,329.9 1057.0,342.3 1060.0,331.1 1062.9,344.5 1065.9,335.4 1068.8,344.7 1071.8,329.8 1074.7,337.8 1077.7,336.1 1080.6,335.9 1083.6,340.2 1086.5,340.0 1089.5,332.6 1092.4,343.7 1095.4,339.5 1098.3,342.6 1101.3,345.9 1104.2,341.6 1107.2,327.4 1110.1,334.7 1113.1,337.7 1116.0,339.9 1119.0,343.1 1121.9,341.9 1124.9,331.4 1127.8,339.1 1130.8,337.6 1133.7,339.7 1136.7,331.4 1139.6,340.4 1142.6,341.5 1145.5,340.6 1148.5,345.8 1151.4,332.4 1154.4,331.5 1157.3,339.3 1160.3,346.1 1163.2,346.0 1166.2,337.4 1169.1,346.1 1172.1,337.5 1175.0,344.5 1178.0,345.6 1180.9,338.4 1183.9,342.6 1186.8,339.1 1189.8,339.9 1192.7,332.4 1195.7,341.1 1198.6,338.1 1201.6,342.1 1204.5,342.9 1207.5,342.6 1210.4,334.1 1213.4,330.7 1216.3,346.1 1219.3,330.1 1222.2,338.8 1225.2,333.9 1228.1,348.6 1231.1,332.9 1234.0,343.0 1237.0,341.6 1239.9,334.1 1242.9,341.3 1245.8,330.7 1248.8,330.8 1251.7,336.1 1254.7,330.9 1257.6,343.0 1260.6,330.6 1263.5,341.9 1266.5,331.0 1269.4,339.2 1272.4,342.6 1275.3,330.3 1278.3,341.7 1281.2,332.6 1284.2,340.8 1287.1,334.8 1290.1,348.3 1293.0,332.7 1296.0,338.1 1298.9,334.8 1301.9,338.0 1304.8,332.0 1307.8,330.9 1310.7,331.8 1313.7,346.8 1316.6,338.6 1319.6,338.6 1322.5,334.4 1325.5,339.1 1328.4,345.0 1331.4,343.8 1334.3,333.8 1337.3,343.5 1340.2,339.7 1343.2,342.6 1346.1,339.9 1349.1,341.7 1352.0,334.2" fill="none" stroke="#006a00" stroke-width="1" stroke-linejoin="miter"/><rect x="1001" y="240" width="1" height="137" fill="#000"/><rect x="1001" y="372" width="366" height="1" fill="#000"/><rect x="1184" y="372" width="1" height="5" fill="#000"/><rect x="1366" y="372" width="1" height="5" fill="#000"/><text x="1001.5" y="388" font-size="11" fill="#000" text-anchor="middle" textLength="60" lengthAdjust="spacingAndGlyphs">12:20:52 PM</text><text x="1184.5" y="388" font-size="11" fill="#000" text-anchor="middle" textLength="60" lengthAdjust="spacingAndGlyphs">12:21:52 PM</text><text x="1366.5" y="388" font-size="11" fill="#000" text-anchor="middle" textLength="60" lengthAdjust="spacingAndGlyphs">12:22:52 PM</text><rect x="1368" y="240" width="82" height="56" fill="#ffffff"/><rect x="1368.5" y="240.5" width="81" height="55" fill="none" stroke="#000" stroke-width="1"/><rect x="1370" y="248" width="10" height="1" fill="#003370"/><text x="1382" y="252.5" font-size="11" fill="#003370" text-anchor="start" textLength="60.71865625" lengthAdjust="spacingAndGlyphs">TurbulenceA</text><rect x="1370" y="261" width="10" height="1" fill="#c80018"/><text x="1382" y="265.5" font-size="11" fill="#c80018" text-anchor="start" textLength="60.71865625" lengthAdjust="spacingAndGlyphs">TurbulenceB</text><rect x="1370" y="274" width="10" height="1" fill="#006a00"/><text x="1382" y="278.5" font-size="11" fill="#006a00" text-anchor="start" textLength="61.31278125" lengthAdjust="spacingAndGlyphs">TurbulenceC</text><rect x="1370" y="287" width="10" height="1" fill="#8c8c00"/><text x="1382" y="291.5" font-size="11" fill="#8c8c00" text-anchor="start" textLength="61.31278125" lengthAdjust="spacingAndGlyphs">TurbulenceD</text><rect x="1450" y="240" width="51" height="17" fill="#f0f0f0"/><rect x="1450" y="240" width="51" height="1" fill="#ffffff"/><rect x="1450" y="240" width="1" height="17" fill="#ffffff"/><rect x="1450" y="256" width="51" height="1" fill="#696969"/><rect x="1500" y="240" width="1" height="17" fill="#696969"/><rect x="1451" y="255" width="49" height="1" fill="#a0a0a0"/><rect x="1499" y="241" width="1" height="15" fill="#a0a0a0"/><text x="1452" y="252.5" font-size="11" fill="#000" text-anchor="start" textLength="45.478453125" lengthAdjust="spacingAndGlyphs">Scrollbars</text><rect x="1450" y="257" width="51" height="17" fill="#f0f0f0"/><rect x="1450" y="257" width="51" height="1" fill="#696969"/><rect x="1450" y="257" width="1" height="17" fill="#696969"/><rect x="1451" y="258" width="49" height="1" fill="#a0a0a0"/><rect x="1451" y="258" width="1" height="15" fill="#a0a0a0"/><rect x="1450" y="273" width="51" height="1" fill="#ffffff"/><rect x="1500" y="257" width="1" height="17" fill="#ffffff"/><text x="1452" y="269.5" font-size="11" fill="#000" text-anchor="start" textLength="34.13390625" lengthAdjust="spacingAndGlyphs">Legend</text><rect x="1450" y="274" width="51" height="17" fill="#f0f0f0"/><rect x="1450" y="274" width="51" height="1" fill="#ffffff"/><rect x="1450" y="274" width="1" height="17" fill="#ffffff"/><rect x="1450" y="290" width="51" height="1" fill="#696969"/><rect x="1500" y="274" width="1" height="17" fill="#696969"/><rect x="1451" y="289" width="49" height="1" fill="#a0a0a0"/><rect x="1499" y="275" width="1" height="15" fill="#a0a0a0"/><text x="1452" y="286.5" font-size="11" fill="#000" text-anchor="start" textLength="36.94134375" lengthAdjust="spacingAndGlyphs">Markers</text><rect x="1450" y="291" width="51" height="17" fill="#f0f0f0"/><rect x="1450" y="291" width="51" height="1" fill="#696969"/><rect x="1450" y="291" width="1" height="17" fill="#696969"/><rect x="1451" y="292" width="49" height="1" fill="#a0a0a0"/><rect x="1451" y="292" width="1" height="15" fill="#a0a0a0"/><rect x="1450" y="307" width="51" height="1" fill="#ffffff"/><rect x="1500" y="291" width="1" height="17" fill="#ffffff"/><text x="1452" y="303.5" font-size="11" fill="#000" text-anchor="start" textLength="18.765656250000003" lengthAdjust="spacingAndGlyphs">Live</text><rect x="1450" y="308" width="51" height="17" fill="#f0f0f0"/><rect x="1450" y="308" width="51" height="1" fill="#ffffff"/><rect x="1450" y="308" width="1" height="17" fill="#ffffff"/><rect x="1450" y="324" width="51" height="1" fill="#696969"/><rect x="1500" y="308" width="1" height="17" fill="#696969"/><rect x="1451" y="323" width="49" height="1" fill="#a0a0a0"/><rect x="1499" y="309" width="1" height="15" fill="#a0a0a0"/><text x="1452" y="320.5" font-size="11" fill="#000" text-anchor="start" textLength="21.033984375000003" lengthAdjust="spacingAndGlyphs">Print</text><rect x="1450" y="325" width="51" height="17" fill="#f0f0f0"/><rect x="1450" y="325" width="51" height="1" fill="#ffffff"/><rect x="1450" y="325" width="1" height="17" fill="#ffffff"/><rect x="1450" y="341" width="51" height="1" fill="#696969"/><rect x="1500" y="325" width="1" height="17" fill="#696969"/><rect x="1451" y="340" width="49" height="1" fill="#a0a0a0"/><rect x="1499" y="326" width="1" height="15" fill="#a0a0a0"/><text x="1452" y="337.5" font-size="11" fill="#000" text-anchor="start" textLength="37.521140625" lengthAdjust="spacingAndGlyphs">Zoom In</text><rect x="1450" y="342" width="51" height="17" fill="#f0f0f0"/><rect x="1450" y="342" width="51" height="1" fill="#ffffff"/><rect x="1450" y="342" width="1" height="17" fill="#ffffff"/><rect x="1450" y="358" width="51" height="1" fill="#696969"/><rect x="1500" y="342" width="1" height="17" fill="#696969"/><rect x="1451" y="357" width="49" height="1" fill="#a0a0a0"/><rect x="1499" y="343" width="1" height="15" fill="#a0a0a0"/><text x="1452" y="354.5" font-size="11" fill="#000" text-anchor="start" textLength="45.478453125" lengthAdjust="spacingAndGlyphs">Zoom Out</text><rect x="0" y="406" width="753" height="199" fill="#a0a0a0"/><rect x="2" y="407" width="750" height="197" fill="#f0f0f0"/><rect x="2" y="407" width="750" height="30" fill="#ffffff"/><rect x="0" y="406" width="1" height="199" fill="#d4d4d4"/><rect x="10" y="414" width="15" height="13" fill="#f4f4f4"/><rect x="10.5" y="414.5" width="14" height="12" fill="none" stroke="#a8acb2" stroke-width="1"/><defs><linearGradient id="ig10_414" x1="0" y1="0" x2="0.3" y2="1"><stop offset="0" stop-color="#5b84bd"/><stop offset="1" stop-color="#4aa85a"/></linearGradient></defs><rect x="12" y="417" width="5" height="8" fill="url(#ig10_414)"/><rect x="19" y="417" width="2" height="8" fill="#dedede"/><rect x="22" y="417" width="2" height="3" fill="#7aa8d8"/><rect x="22" y="420" width="2" height="2" fill="#8cc88c"/><rect x="11" y="415" width="13" height="1" fill="#c8ccd2"/><text x="31" y="426" font-size="12" fill="#999999" text-anchor="start" textLength="110.5" lengthAdjust="spacingAndGlyphs">[DHCP] Profile factor</text><rect x="633" y="421" width="10" height="1" fill="#808080"/><rect x="678.5" y="416.5" width="9" height="9" fill="none" stroke="#808080" stroke-width="1"/><path d="M724 416 L734 426 M734 416 L724 426" stroke="#808080" stroke-width="1" fill="none" shape-rendering="auto"/><rect x="2" y="437" width="167" height="21" fill="#e5e5e5"/><rect x="2.5" y="437.5" width="166" height="20" fill="none" stroke="#acacac" stroke-width="1"/><text x="6" y="452" font-size="12" fill="#000" text-anchor="start" textLength="62" lengthAdjust="spacingAndGlyphs">Profile factor</text><path d="M157 445.5 L161 449.5 L165 445.5" fill="none" stroke="#333" stroke-width="1"/><rect x="8" y="464" width="73" height="18" fill="#e1e1e1"/><rect x="8.5" y="464.5" width="72" height="17" fill="none" stroke="#adadad" stroke-width="1"/><text x="43.7" y="477" font-size="12" fill="#000" text-anchor="middle" textLength="54" lengthAdjust="spacingAndGlyphs">Save Chart</text><rect x="7.5" y="492.5" width="161" height="107" fill="none" stroke="#dcdcdc" stroke-width="1"/><rect x="13" y="487" width="63" height="10" fill="#f0f0f0"/><text x="16" y="497" font-size="12" fill="#000" text-anchor="start" textLength="56" lengthAdjust="spacingAndGlyphs">Vertical axis</text><circle cx="22.5" cy="510" r="6" fill="#fff" stroke="#333" stroke-width="1" shape-rendering="auto"/><circle cx="22.5" cy="510" r="3.5" fill="#333" shape-rendering="auto"/><text x="32" y="513.5" font-size="12" fill="#000" text-anchor="start" textLength="50" lengthAdjust="spacingAndGlyphs">Auto-scale</text><circle cx="22.5" cy="526" r="6" fill="#fff" stroke="#333" stroke-width="1" shape-rendering="auto"/><text x="32" y="529.5" font-size="12" fill="#000" text-anchor="start" textLength="62" lengthAdjust="spacingAndGlyphs">Custom scale</text><text x="16" y="549" font-size="12" fill="#000" text-anchor="start" textLength="20" lengthAdjust="spacingAndGlyphs">Min:</text><text x="16" y="568" font-size="12" fill="#000" text-anchor="start" textLength="23.4" lengthAdjust="spacingAndGlyphs">Max:</text><rect x="55" y="535" width="42" height="20" fill="#fff"/><rect x="55.5" y="535.5" width="41" height="19" fill="none" stroke="#7a7a7a" stroke-width="1"/><rect x="55" y="554" width="42" height="20" fill="#fff"/><rect x="55.5" y="554.5" width="41" height="19" fill="none" stroke="#7a7a7a" stroke-width="1"/><text x="62" y="549" font-size="12" fill="#000" text-anchor="start" textLength="15.847187499999999" lengthAdjust="spacingAndGlyphs">0.8</text><text x="62" y="568" font-size="12" fill="#000" text-anchor="start" textLength="15.847187499999999" lengthAdjust="spacingAndGlyphs">1.4</text><text x="17" y="587.5" font-size="12" fill="#000" text-anchor="start" textLength="54" lengthAdjust="spacingAndGlyphs"># intervals:</text><rect x="76" y="574" width="21" height="20" fill="#fff"/><rect x="76.5" y="574.5" width="20" height="19" fill="none" stroke="#7a7a7a" stroke-width="1"/><text x="80" y="588" font-size="12" fill="#000" text-anchor="start">6</text><rect x="104" y="575" width="34" height="18" fill="#e1e1e1"/><rect x="104.5" y="575.5" width="33" height="17" fill="none" stroke="#adadad" stroke-width="1"/><text x="120.2" y="588.5" font-size="12" fill="#000" text-anchor="middle" textLength="17" lengthAdjust="spacingAndGlyphs">Set</text><text x="0" y="0" font-size="12" fill="#000" text-anchor="middle" textLength="63" lengthAdjust="spacingAndGlyphs" transform="translate(183.5,521) rotate(-90)">Profile factor</text><rect x="249" y="444" width="448" height="132" fill="#ffffff"/><rect x="249" y="501" width="447" height="39" fill="#00ff00"/><rect x="245" y="444" width="4" height="1" fill="#000"/><text x="243" y="449" font-size="11" fill="#000" text-anchor="end" textLength="26.9745" lengthAdjust="spacingAndGlyphs">1.400</text><rect x="245" y="477" width="4" height="1" fill="#000"/><text x="243" y="482" font-size="11" fill="#000" text-anchor="end" textLength="26.9745" lengthAdjust="spacingAndGlyphs">1.300</text><rect x="245" y="510" width="4" height="1" fill="#000"/><text x="243" y="515" font-size="11" fill="#000" text-anchor="end" textLength="26.9745" lengthAdjust="spacingAndGlyphs">1.200</text><rect x="245" y="543" width="4" height="1" fill="#000"/><text x="243" y="548" font-size="11" fill="#000" text-anchor="end" textLength="26.9745" lengthAdjust="spacingAndGlyphs">1.100</text><rect x="245" y="576" width="4" height="1" fill="#000"/><text x="243" y="581" font-size="11" fill="#000" text-anchor="end" textLength="26.9745" lengthAdjust="spacingAndGlyphs">1.000</text><polyline points="249.0,525.6 252.9,522.5 256.9,523.7 260.8,524.2 264.7,520.6 268.6,522.2 272.6,520.8 276.5,519.0 280.4,523.9 284.3,522.8 288.3,523.8 292.2,521.3 296.1,518.9 300.0,522.8 304.0,519.7 307.9,525.0 311.8,519.4 315.8,523.7 319.7,520.4 323.6,521.0 327.5,524.9 331.5,523.0 335.4,520.9 339.3,518.8 343.2,518.6 347.2,523.2 351.1,521.1 355.0,522.1 358.9,519.1 362.9,521.1 366.8,519.2 370.7,518.6 374.7,522.2 378.6,522.2 382.5,523.3 386.4,520.1 390.4,523.0 394.3,519.5 398.2,521.9 402.1,523.3 406.1,521.1 410.0,526.6 413.9,520.4 417.8,518.8 421.8,523.5 425.7,518.7 429.6,525.1 433.6,523.3 437.5,523.2 441.4,524.9 445.3,523.8 449.3,519.8 453.2,524.0 457.1,520.6 461.0,519.5 465.0,521.7 468.9,522.1 472.8,523.8 476.7,520.0 480.7,519.0 484.6,521.4 488.5,519.9 492.4,524.3 496.4,523.2 500.3,520.5 504.2,523.6 508.2,520.3 512.1,525.0 516.0,519.3 519.9,523.8 523.9,522.8 527.8,519.8 531.7,523.9 535.6,522.9 539.6,522.7 543.5,524.7 547.4,521.1 551.3,521.9 555.3,523.3 559.2,525.0 563.1,523.2 567.1,525.7 571.0,520.2 574.9,519.2 578.8,522.5 582.8,523.6 586.7,519.6 590.6,522.7 594.5,523.9 598.5,521.6 602.4,520.7 606.3,519.5 610.2,522.6 614.2,521.5 618.1,522.5 622.0,523.6 626.0,524.9 629.9,520.7 633.8,518.7 637.7,524.8 641.7,521.9 645.6,525.1 649.5,524.9 653.4,521.6 657.4,522.8 661.3,522.3 665.2,522.0 669.1,519.2 673.1,520.4 677.0,522.4" fill="none" stroke="#1c2f6a" stroke-width="1" stroke-linejoin="miter"/><rect x="249" y="444" width="1" height="137" fill="#000"/><rect x="249" y="576" width="448" height="1" fill="#000"/><rect x="472" y="576" width="1" height="5" fill="#000"/><rect x="696" y="576" width="1" height="5" fill="#000"/><text x="249.5" y="592" font-size="11" fill="#000" text-anchor="middle" textLength="60" lengthAdjust="spacingAndGlyphs">12:20:52 PM</text><text x="472.5" y="592" font-size="11" fill="#000" text-anchor="middle" textLength="60" lengthAdjust="spacingAndGlyphs">12:21:52 PM</text><text x="696.5" y="592" font-size="11" fill="#000" text-anchor="middle" textLength="60" lengthAdjust="spacingAndGlyphs">12:22:52 PM</text><rect x="698" y="444" width="51" height="17" fill="#f0f0f0"/><rect x="698" y="444" width="51" height="1" fill="#ffffff"/><rect x="698" y="444" width="1" height="17" fill="#ffffff"/><rect x="698" y="460" width="51" height="1" fill="#696969"/><rect x="748" y="444" width="1" height="17" fill="#696969"/><rect x="699" y="459" width="49" height="1" fill="#a0a0a0"/><rect x="747" y="445" width="1" height="15" fill="#a0a0a0"/><text x="700" y="456.5" font-size="11" fill="#000" text-anchor="start" textLength="45.478453125" lengthAdjust="spacingAndGlyphs">Scrollbars</text><rect x="698" y="461" width="51" height="17" fill="#f0f0f0"/><rect x="698" y="461" width="51" height="1" fill="#696969"/><rect x="698" y="461" width="1" height="17" fill="#696969"/><rect x="699" y="462" width="49" height="1" fill="#a0a0a0"/><rect x="699" y="462" width="1" height="15" fill="#a0a0a0"/><rect x="698" y="477" width="51" height="1" fill="#ffffff"/><rect x="748" y="461" width="1" height="17" fill="#ffffff"/><text x="700" y="473.5" font-size="11" fill="#000" text-anchor="start" textLength="34.13390625" lengthAdjust="spacingAndGlyphs">Legend</text><rect x="698" y="478" width="51" height="17" fill="#f0f0f0"/><rect x="698" y="478" width="51" height="1" fill="#ffffff"/><rect x="698" y="478" width="1" height="17" fill="#ffffff"/><rect x="698" y="494" width="51" height="1" fill="#696969"/><rect x="748" y="478" width="1" height="17" fill="#696969"/><rect x="699" y="493" width="49" height="1" fill="#a0a0a0"/><rect x="747" y="479" width="1" height="15" fill="#a0a0a0"/><text x="700" y="490.5" font-size="11" fill="#000" text-anchor="start" textLength="36.94134375" lengthAdjust="spacingAndGlyphs">Markers</text><rect x="698" y="495" width="51" height="17" fill="#f0f0f0"/><rect x="698" y="495" width="51" height="1" fill="#696969"/><rect x="698" y="495" width="1" height="17" fill="#696969"/><rect x="699" y="496" width="49" height="1" fill="#a0a0a0"/><rect x="699" y="496" width="1" height="15" fill="#a0a0a0"/><rect x="698" y="511" width="51" height="1" fill="#ffffff"/><rect x="748" y="495" width="1" height="17" fill="#ffffff"/><text x="700" y="507.5" font-size="11" fill="#000" text-anchor="start" textLength="18.765656250000003" lengthAdjust="spacingAndGlyphs">Live</text><rect x="698" y="512" width="51" height="17" fill="#f0f0f0"/><rect x="698" y="512" width="51" height="1" fill="#ffffff"/><rect x="698" y="512" width="1" height="17" fill="#ffffff"/><rect x="698" y="528" width="51" height="1" fill="#696969"/><rect x="748" y="512" width="1" height="17" fill="#696969"/><rect x="699" y="527" width="49" height="1" fill="#a0a0a0"/><rect x="747" y="513" width="1" height="15" fill="#a0a0a0"/><text x="700" y="524.5" font-size="11" fill="#000" text-anchor="start" textLength="21.033984375000003" lengthAdjust="spacingAndGlyphs">Print</text><rect x="698" y="529" width="51" height="17" fill="#f0f0f0"/><rect x="698" y="529" width="51" height="1" fill="#ffffff"/><rect x="698" y="529" width="1" height="17" fill="#ffffff"/><rect x="698" y="545" width="51" height="1" fill="#696969"/><rect x="748" y="529" width="1" height="17" fill="#696969"/><rect x="699" y="544" width="49" height="1" fill="#a0a0a0"/><rect x="747" y="530" width="1" height="15" fill="#a0a0a0"/><text x="700" y="541.5" font-size="11" fill="#000" text-anchor="start" textLength="37.521140625" lengthAdjust="spacingAndGlyphs">Zoom In</text><rect x="698" y="546" width="51" height="17" fill="#f0f0f0"/><rect x="698" y="546" width="51" height="1" fill="#ffffff"/><rect x="698" y="546" width="1" height="17" fill="#ffffff"/><rect x="698" y="562" width="51" height="1" fill="#696969"/><rect x="748" y="546" width="1" height="17" fill="#696969"/><rect x="699" y="561" width="49" height="1" fill="#a0a0a0"/><rect x="747" y="547" width="1" height="15" fill="#a0a0a0"/><text x="700" y="558.5" font-size="11" fill="#000" text-anchor="start" textLength="45.478453125" lengthAdjust="spacingAndGlyphs">Zoom Out</text><rect x="753" y="405" width="752" height="200" fill="#a0a0a0"/><rect x="754" y="406" width="750" height="198" fill="#f0f0f0"/><rect x="754" y="406" width="750" height="30" fill="#ffffff"/><rect x="762" y="413" width="15" height="13" fill="#f4f4f4"/><rect x="762.5" y="413.5" width="14" height="12" fill="none" stroke="#a8acb2" stroke-width="1"/><defs><linearGradient id="ig762_413" x1="0" y1="0" x2="0.3" y2="1"><stop offset="0" stop-color="#5b84bd"/><stop offset="1" stop-color="#4aa85a"/></linearGradient></defs><rect x="764" y="416" width="5" height="8" fill="url(#ig762_413)"/><rect x="771" y="416" width="2" height="8" fill="#dedede"/><rect x="774" y="416" width="2" height="3" fill="#7aa8d8"/><rect x="774" y="419" width="2" height="2" fill="#8cc88c"/><rect x="763" y="414" width="13" height="1" fill="#c8ccd2"/><text x="783" y="425" font-size="12" fill="#999999" text-anchor="start" textLength="99.5" lengthAdjust="spacingAndGlyphs">[DHCP] Cross-flow</text><rect x="1385" y="420" width="10" height="1" fill="#808080"/><rect x="1430.5" y="415.5" width="9" height="9" fill="none" stroke="#808080" stroke-width="1"/><path d="M1476 415 L1486 425 M1486 415 L1476 425" stroke="#808080" stroke-width="1" fill="none" shape-rendering="auto"/><rect x="754" y="436" width="167" height="21" fill="#e5e5e5"/><rect x="754.5" y="436.5" width="166" height="20" fill="none" stroke="#acacac" stroke-width="1"/><text x="758" y="451" font-size="12" fill="#000" text-anchor="start" textLength="51" lengthAdjust="spacingAndGlyphs">Cross-flow</text><path d="M909 444.5 L913 448.5 L917 444.5" fill="none" stroke="#333" stroke-width="1"/><rect x="760" y="463" width="73" height="18" fill="#e1e1e1"/><rect x="760.5" y="463.5" width="72" height="17" fill="none" stroke="#adadad" stroke-width="1"/><text x="795.7" y="476" font-size="12" fill="#000" text-anchor="middle" textLength="54" lengthAdjust="spacingAndGlyphs">Save Chart</text><rect x="759.5" y="491.5" width="161" height="107" fill="none" stroke="#dcdcdc" stroke-width="1"/><rect x="765" y="486" width="63" height="10" fill="#f0f0f0"/><text x="768" y="496" font-size="12" fill="#000" text-anchor="start" textLength="56" lengthAdjust="spacingAndGlyphs">Vertical axis</text><circle cx="774.5" cy="509" r="6" fill="#fff" stroke="#333" stroke-width="1" shape-rendering="auto"/><circle cx="774.5" cy="509" r="3.5" fill="#333" shape-rendering="auto"/><text x="784" y="512.5" font-size="12" fill="#000" text-anchor="start" textLength="50" lengthAdjust="spacingAndGlyphs">Auto-scale</text><circle cx="774.5" cy="525" r="6" fill="#fff" stroke="#333" stroke-width="1" shape-rendering="auto"/><text x="784" y="528.5" font-size="12" fill="#000" text-anchor="start" textLength="62" lengthAdjust="spacingAndGlyphs">Custom scale</text><text x="768" y="548" font-size="12" fill="#000" text-anchor="start" textLength="20" lengthAdjust="spacingAndGlyphs">Min:</text><text x="768" y="567" font-size="12" fill="#000" text-anchor="start" textLength="23.4" lengthAdjust="spacingAndGlyphs">Max:</text><rect x="807" y="534" width="42" height="20" fill="#fff"/><rect x="807.5" y="534.5" width="41" height="19" fill="none" stroke="#7a7a7a" stroke-width="1"/><rect x="807" y="553" width="42" height="20" fill="#fff"/><rect x="807.5" y="553.5" width="41" height="19" fill="none" stroke="#7a7a7a" stroke-width="1"/><text x="814" y="548" font-size="12" fill="#000" text-anchor="start" textLength="15.847187499999999" lengthAdjust="spacingAndGlyphs">0.8</text><text x="814" y="567" font-size="12" fill="#000" text-anchor="start" textLength="15.847187499999999" lengthAdjust="spacingAndGlyphs">1.4</text><text x="769" y="586.5" font-size="12" fill="#000" text-anchor="start" textLength="54" lengthAdjust="spacingAndGlyphs"># intervals:</text><rect x="828" y="573" width="21" height="20" fill="#fff"/><rect x="828.5" y="573.5" width="20" height="19" fill="none" stroke="#7a7a7a" stroke-width="1"/><text x="832" y="587" font-size="12" fill="#000" text-anchor="start">6</text><rect x="856" y="574" width="34" height="18" fill="#e1e1e1"/><rect x="856.5" y="574.5" width="33" height="17" fill="none" stroke="#adadad" stroke-width="1"/><text x="872.2" y="587.5" font-size="12" fill="#000" text-anchor="middle" textLength="17" lengthAdjust="spacingAndGlyphs">Set</text><text x="0" y="0" font-size="12" fill="#000" text-anchor="middle" textLength="51" lengthAdjust="spacingAndGlyphs" transform="translate(935.5,520) rotate(-90)">Cross-flow</text><rect x="1001" y="443" width="448" height="132" fill="#ffffff"/><rect x="1001" y="490" width="447" height="39" fill="#00ff00"/><rect x="997" y="443" width="4" height="1" fill="#000"/><text x="995" y="448" font-size="11" fill="#000" text-anchor="end" textLength="26.9745" lengthAdjust="spacingAndGlyphs">1.100</text><rect x="997" y="509" width="4" height="1" fill="#000"/><text x="995" y="514" font-size="11" fill="#000" text-anchor="end" textLength="26.9745" lengthAdjust="spacingAndGlyphs">1.000</text><rect x="997" y="575" width="4" height="1" fill="#000"/><text x="995" y="580" font-size="11" fill="#000" text-anchor="end" textLength="26.9745" lengthAdjust="spacingAndGlyphs">0.900</text><polyline points="1001.0,509.1 1005.3,511.6 1009.6,506.8 1014.0,507.0 1018.3,504.9 1022.6,504.3 1026.9,503.6 1031.3,508.8 1035.6,511.6 1039.9,502.5 1044.2,513.2 1048.6,503.6 1052.9,505.0 1057.2,512.1 1061.5,512.1 1065.8,505.4 1070.2,513.0 1074.5,506.3 1078.8,511.5 1083.1,503.6 1087.5,511.9 1091.8,508.8 1096.1,507.8 1100.4,513.9 1104.8,505.0 1109.1,504.8 1113.4,503.2 1117.7,515.5 1122.1,513.1 1126.4,503.2 1130.7,512.3 1135.0,512.1 1139.3,505.8 1143.7,506.4 1148.0,503.5 1152.3,510.7 1156.6,504.9 1161.0,508.7 1165.3,502.1 1169.6,511.1 1173.9,510.3 1178.3,509.8 1182.6,509.1 1186.9,504.7 1191.2,511.1 1195.5,513.3 1199.9,509.2 1204.2,506.9 1208.5,509.7 1212.8,499.0 1217.2,506.5 1221.5,507.1 1225.8,502.1 1230.1,502.7 1234.5,502.4 1238.8,507.5 1243.1,511.5 1247.4,504.2 1251.7,506.5 1256.1,505.5 1260.4,502.9 1264.7,511.8 1269.0,506.3 1273.4,503.3 1277.7,506.6 1282.0,504.1 1286.3,510.8 1290.7,506.6 1295.0,511.5 1299.3,512.8 1303.6,502.5 1307.9,513.0 1312.3,505.1 1316.6,513.3 1320.9,511.3 1325.2,509.8 1329.6,511.6 1333.9,511.0 1338.2,505.5 1342.5,503.0 1346.9,506.9 1351.2,505.0 1355.5,511.4 1359.8,506.7 1364.2,507.8 1368.5,505.1 1372.8,511.5 1377.1,504.7 1381.4,503.5 1385.8,506.6 1390.1,512.8 1394.4,501.7 1398.7,504.7 1403.1,505.9 1407.4,509.5 1411.7,511.6 1416.0,512.6 1420.4,509.9 1424.7,509.9 1429.0,511.3" fill="none" stroke="#1c2f6a" stroke-width="1" stroke-linejoin="miter"/><rect x="1001" y="443" width="1" height="137" fill="#000"/><rect x="1001" y="575" width="448" height="1" fill="#000"/><rect x="1224" y="575" width="1" height="5" fill="#000"/><rect x="1448" y="575" width="1" height="5" fill="#000"/><text x="1001.5" y="591" font-size="11" fill="#000" text-anchor="middle" textLength="60" lengthAdjust="spacingAndGlyphs">12:20:52 PM</text><text x="1224.5" y="591" font-size="11" fill="#000" text-anchor="middle" textLength="60" lengthAdjust="spacingAndGlyphs">12:21:52 PM</text><text x="1448.5" y="591" font-size="11" fill="#000" text-anchor="middle" textLength="60" lengthAdjust="spacingAndGlyphs">12:22:52 PM</text><rect x="1450" y="443" width="51" height="17" fill="#f0f0f0"/><rect x="1450" y="443" width="51" height="1" fill="#ffffff"/><rect x="1450" y="443" width="1" height="17" fill="#ffffff"/><rect x="1450" y="459" width="51" height="1" fill="#696969"/><rect x="1500" y="443" width="1" height="17" fill="#696969"/><rect x="1451" y="458" width="49" height="1" fill="#a0a0a0"/><rect x="1499" y="444" width="1" height="15" fill="#a0a0a0"/><text x="1452" y="455.5" font-size="11" fill="#000" text-anchor="start" textLength="45.478453125" lengthAdjust="spacingAndGlyphs">Scrollbars</text><rect x="1450" y="460" width="51" height="17" fill="#f0f0f0"/><rect x="1450" y="460" width="51" height="1" fill="#696969"/><rect x="1450" y="460" width="1" height="17" fill="#696969"/><rect x="1451" y="461" width="49" height="1" fill="#a0a0a0"/><rect x="1451" y="461" width="1" height="15" fill="#a0a0a0"/><rect x="1450" y="476" width="51" height="1" fill="#ffffff"/><rect x="1500" y="460" width="1" height="17" fill="#ffffff"/><text x="1452" y="472.5" font-size="11" fill="#000" text-anchor="start" textLength="34.13390625" lengthAdjust="spacingAndGlyphs">Legend</text><rect x="1450" y="477" width="51" height="17" fill="#f0f0f0"/><rect x="1450" y="477" width="51" height="1" fill="#ffffff"/><rect x="1450" y="477" width="1" height="17" fill="#ffffff"/><rect x="1450" y="493" width="51" height="1" fill="#696969"/><rect x="1500" y="477" width="1" height="17" fill="#696969"/><rect x="1451" y="492" width="49" height="1" fill="#a0a0a0"/><rect x="1499" y="478" width="1" height="15" fill="#a0a0a0"/><text x="1452" y="489.5" font-size="11" fill="#000" text-anchor="start" textLength="36.94134375" lengthAdjust="spacingAndGlyphs">Markers</text><rect x="1450" y="494" width="51" height="17" fill="#f0f0f0"/><rect x="1450" y="494" width="51" height="1" fill="#696969"/><rect x="1450" y="494" width="1" height="17" fill="#696969"/><rect x="1451" y="495" width="49" height="1" fill="#a0a0a0"/><rect x="1451" y="495" width="1" height="15" fill="#a0a0a0"/><rect x="1450" y="510" width="51" height="1" fill="#ffffff"/><rect x="1500" y="494" width="1" height="17" fill="#ffffff"/><text x="1452" y="506.5" font-size="11" fill="#000" text-anchor="start" textLength="18.765656250000003" lengthAdjust="spacingAndGlyphs">Live</text><rect x="1450" y="511" width="51" height="17" fill="#f0f0f0"/><rect x="1450" y="511" width="51" height="1" fill="#ffffff"/><rect x="1450" y="511" width="1" height="17" fill="#ffffff"/><rect x="1450" y="527" width="51" height="1" fill="#696969"/><rect x="1500" y="511" width="1" height="17" fill="#696969"/><rect x="1451" y="526" width="49" height="1" fill="#a0a0a0"/><rect x="1499" y="512" width="1" height="15" fill="#a0a0a0"/><text x="1452" y="523.5" font-size="11" fill="#000" text-anchor="start" textLength="21.033984375000003" lengthAdjust="spacingAndGlyphs">Print</text><rect x="1450" y="528" width="51" height="17" fill="#f0f0f0"/><rect x="1450" y="528" width="51" height="1" fill="#ffffff"/><rect x="1450" y="528" width="1" height="17" fill="#ffffff"/><rect x="1450" y="544" width="51" height="1" fill="#696969"/><rect x="1500" y="528" width="1" height="17" fill="#696969"/><rect x="1451" y="543" width="49" height="1" fill="#a0a0a0"/><rect x="1499" y="529" width="1" height="15" fill="#a0a0a0"/><text x="1452" y="540.5" font-size="11" fill="#000" text-anchor="start" textLength="37.521140625" lengthAdjust="spacingAndGlyphs">Zoom In</text><rect x="1450" y="545" width="51" height="17" fill="#f0f0f0"/><rect x="1450" y="545" width="51" height="1" fill="#ffffff"/><rect x="1450" y="545" width="1" height="17" fill="#ffffff"/><rect x="1450" y="561" width="51" height="1" fill="#696969"/><rect x="1500" y="545" width="1" height="17" fill="#696969"/><rect x="1451" y="560" width="49" height="1" fill="#a0a0a0"/><rect x="1499" y="546" width="1" height="15" fill="#a0a0a0"/><text x="1452" y="557.5" font-size="11" fill="#000" text-anchor="start" textLength="45.478453125" lengthAdjust="spacingAndGlyphs">Zoom Out</text><rect x="0" y="605" width="753" height="199" fill="#a0a0a0"/><rect x="2" y="606" width="750" height="197" fill="#f0f0f0"/><rect x="2" y="606" width="750" height="30" fill="#ffffff"/><rect x="0" y="605" width="1" height="199" fill="#d4d4d4"/><rect x="10" y="613" width="15" height="13" fill="#f4f4f4"/><rect x="10.5" y="613.5" width="14" height="12" fill="none" stroke="#a8acb2" stroke-width="1"/><defs><linearGradient id="ig10_613" x1="0" y1="0" x2="0.3" y2="1"><stop offset="0" stop-color="#5b84bd"/><stop offset="1" stop-color="#4aa85a"/></linearGradient></defs><rect x="12" y="616" width="5" height="8" fill="url(#ig10_613)"/><rect x="19" y="616" width="2" height="8" fill="#dedede"/><rect x="22" y="616" width="2" height="3" fill="#7aa8d8"/><rect x="22" y="619" width="2" height="2" fill="#8cc88c"/><rect x="11" y="614" width="13" height="1" fill="#c8ccd2"/><text x="31" y="625" font-size="12" fill="#999999" text-anchor="start" textLength="96.6" lengthAdjust="spacingAndGlyphs">[DHCP] Symmetry</text><rect x="633" y="620" width="10" height="1" fill="#808080"/><rect x="678.5" y="615.5" width="9" height="9" fill="none" stroke="#808080" stroke-width="1"/><path d="M724 615 L734 625 M734 615 L724 625" stroke="#808080" stroke-width="1" fill="none" shape-rendering="auto"/><rect x="2" y="636" width="167" height="21" fill="#e5e5e5"/><rect x="2.5" y="636.5" width="166" height="20" fill="none" stroke="#acacac" stroke-width="1"/><text x="6" y="651" font-size="12" fill="#000" text-anchor="start" textLength="48" lengthAdjust="spacingAndGlyphs">Symmetry</text><path d="M157 644.5 L161 648.5 L165 644.5" fill="none" stroke="#333" stroke-width="1"/><rect x="8" y="663" width="73" height="18" fill="#e1e1e1"/><rect x="8.5" y="663.5" width="72" height="17" fill="none" stroke="#adadad" stroke-width="1"/><text x="43.7" y="676" font-size="12" fill="#000" text-anchor="middle" textLength="54" lengthAdjust="spacingAndGlyphs">Save Chart</text><rect x="7.5" y="691.5" width="161" height="107" fill="none" stroke="#dcdcdc" stroke-width="1"/><rect x="13" y="686" width="63" height="10" fill="#f0f0f0"/><text x="16" y="696" font-size="12" fill="#000" text-anchor="start" textLength="56" lengthAdjust="spacingAndGlyphs">Vertical axis</text><circle cx="22.5" cy="709" r="6" fill="#fff" stroke="#333" stroke-width="1" shape-rendering="auto"/><circle cx="22.5" cy="709" r="3.5" fill="#333" shape-rendering="auto"/><text x="32" y="712.5" font-size="12" fill="#000" text-anchor="start" textLength="50" lengthAdjust="spacingAndGlyphs">Auto-scale</text><circle cx="22.5" cy="725" r="6" fill="#fff" stroke="#333" stroke-width="1" shape-rendering="auto"/><text x="32" y="728.5" font-size="12" fill="#000" text-anchor="start" textLength="62" lengthAdjust="spacingAndGlyphs">Custom scale</text><text x="16" y="748" font-size="12" fill="#000" text-anchor="start" textLength="20" lengthAdjust="spacingAndGlyphs">Min:</text><text x="16" y="767" font-size="12" fill="#000" text-anchor="start" textLength="23.4" lengthAdjust="spacingAndGlyphs">Max:</text><rect x="55" y="734" width="42" height="20" fill="#fff"/><rect x="55.5" y="734.5" width="41" height="19" fill="none" stroke="#7a7a7a" stroke-width="1"/><rect x="55" y="753" width="42" height="20" fill="#fff"/><rect x="55.5" y="753.5" width="41" height="19" fill="none" stroke="#7a7a7a" stroke-width="1"/><text x="62" y="748" font-size="12" fill="#000" text-anchor="start" textLength="15.847187499999999" lengthAdjust="spacingAndGlyphs">0.8</text><text x="62" y="767" font-size="12" fill="#000" text-anchor="start" textLength="15.847187499999999" lengthAdjust="spacingAndGlyphs">1.4</text><text x="17" y="786.5" font-size="12" fill="#000" text-anchor="start" textLength="54" lengthAdjust="spacingAndGlyphs"># intervals:</text><rect x="76" y="773" width="21" height="20" fill="#fff"/><rect x="76.5" y="773.5" width="20" height="19" fill="none" stroke="#7a7a7a" stroke-width="1"/><text x="80" y="787" font-size="12" fill="#000" text-anchor="start">6</text><rect x="104" y="774" width="34" height="18" fill="#e1e1e1"/><rect x="104.5" y="774.5" width="33" height="17" fill="none" stroke="#adadad" stroke-width="1"/><text x="120.2" y="787.5" font-size="12" fill="#000" text-anchor="middle" textLength="17" lengthAdjust="spacingAndGlyphs">Set</text><text x="0" y="0" font-size="12" fill="#000" text-anchor="middle" textLength="48.4" lengthAdjust="spacingAndGlyphs" transform="translate(183.5,720) rotate(-90)">Symmetry</text><rect x="249" y="643" width="448" height="132" fill="#ffffff"/><rect x="249" y="693" width="447" height="33" fill="#00ff00"/><rect x="245" y="643" width="4" height="1" fill="#000"/><text x="243" y="648" font-size="11" fill="#000" text-anchor="end" textLength="26.9745" lengthAdjust="spacingAndGlyphs">1.200</text><rect x="245" y="676" width="4" height="1" fill="#000"/><text x="243" y="681" font-size="11" fill="#000" text-anchor="end" textLength="26.9745" lengthAdjust="spacingAndGlyphs">1.100</text><rect x="245" y="709" width="4" height="1" fill="#000"/><text x="243" y="714" font-size="11" fill="#000" text-anchor="end" textLength="26.9745" lengthAdjust="spacingAndGlyphs">1.000</text><rect x="245" y="742" width="4" height="1" fill="#000"/><text x="243" y="747" font-size="11" fill="#000" text-anchor="end" textLength="26.9745" lengthAdjust="spacingAndGlyphs">0.900</text><rect x="245" y="775" width="4" height="1" fill="#000"/><text x="243" y="780" font-size="11" fill="#000" text-anchor="end" textLength="26.9745" lengthAdjust="spacingAndGlyphs">0.800</text><polyline points="249.0,703.3 252.9,704.1 256.9,703.4 260.8,696.5 264.7,696.1 268.6,700.3 272.6,699.9 276.5,695.8 280.4,696.0 284.3,705.4 288.3,701.0 292.2,703.9 296.1,702.1 300.0,696.5 304.0,703.8 307.9,701.4 311.8,701.0 315.8,695.9 319.7,697.5 323.6,699.8 327.5,695.9 331.5,705.5 335.4,701.6 339.3,693.5 343.2,700.3 347.2,702.2 351.1,704.5 355.0,699.2 358.9,697.5 362.9,695.8 366.8,699.3 370.7,700.5 374.7,696.5 378.6,697.9 382.5,704.8 386.4,700.0 390.4,697.2 394.3,698.5 398.2,703.6 402.1,705.2 406.1,700.4 410.0,696.0 413.9,696.9 417.8,700.0 421.8,701.5 425.7,704.6 429.6,695.2 433.6,699.0 437.5,700.2 441.4,696.2 445.3,698.7 449.3,698.5 453.2,705.5 457.1,702.9 461.0,695.9 465.0,701.7 468.9,701.9 472.8,700.0 476.7,698.9 480.7,701.7 484.6,702.5 488.5,703.2 492.4,703.6 496.4,705.2 500.3,703.9 504.2,696.5 508.2,705.7 512.1,705.0 516.0,700.4 519.9,704.3 523.9,703.0 527.8,696.5 531.7,705.7 535.6,701.4 539.6,697.5 543.5,699.3 547.4,699.6 551.3,698.1 555.3,697.2 559.2,699.4 563.1,700.5 567.1,703.7 571.0,697.3 574.9,705.0 578.8,704.5 582.8,700.1 586.7,699.2 590.6,700.6 594.5,697.6 598.5,697.8 602.4,703.7 606.3,696.1 610.2,697.7 614.2,703.5 618.1,697.8 622.0,697.7 626.0,703.4 629.9,702.6 633.8,697.9 637.7,704.4 641.7,701.0 645.6,704.9 649.5,699.0 653.4,701.9 657.4,701.6 661.3,705.1 665.2,705.5 669.1,705.1 673.1,701.4 677.0,703.8" fill="none" stroke="#1c2f6a" stroke-width="1" stroke-linejoin="miter"/><rect x="249" y="643" width="1" height="137" fill="#000"/><rect x="249" y="775" width="448" height="1" fill="#000"/><rect x="472" y="775" width="1" height="5" fill="#000"/><rect x="696" y="775" width="1" height="5" fill="#000"/><text x="249.5" y="791" font-size="11" fill="#000" text-anchor="middle" textLength="60" lengthAdjust="spacingAndGlyphs">12:20:52 PM</text><text x="472.5" y="791" font-size="11" fill="#000" text-anchor="middle" textLength="60" lengthAdjust="spacingAndGlyphs">12:21:52 PM</text><text x="696.5" y="791" font-size="11" fill="#000" text-anchor="middle" textLength="60" lengthAdjust="spacingAndGlyphs">12:22:52 PM</text><rect x="698" y="643" width="51" height="17" fill="#f0f0f0"/><rect x="698" y="643" width="51" height="1" fill="#ffffff"/><rect x="698" y="643" width="1" height="17" fill="#ffffff"/><rect x="698" y="659" width="51" height="1" fill="#696969"/><rect x="748" y="643" width="1" height="17" fill="#696969"/><rect x="699" y="658" width="49" height="1" fill="#a0a0a0"/><rect x="747" y="644" width="1" height="15" fill="#a0a0a0"/><text x="700" y="655.5" font-size="11" fill="#000" text-anchor="start" textLength="45.478453125" lengthAdjust="spacingAndGlyphs">Scrollbars</text><rect x="698" y="660" width="51" height="17" fill="#f0f0f0"/><rect x="698" y="660" width="51" height="1" fill="#696969"/><rect x="698" y="660" width="1" height="17" fill="#696969"/><rect x="699" y="661" width="49" height="1" fill="#a0a0a0"/><rect x="699" y="661" width="1" height="15" fill="#a0a0a0"/><rect x="698" y="676" width="51" height="1" fill="#ffffff"/><rect x="748" y="660" width="1" height="17" fill="#ffffff"/><text x="700" y="672.5" font-size="11" fill="#000" text-anchor="start" textLength="34.13390625" lengthAdjust="spacingAndGlyphs">Legend</text><rect x="698" y="677" width="51" height="17" fill="#f0f0f0"/><rect x="698" y="677" width="51" height="1" fill="#ffffff"/><rect x="698" y="677" width="1" height="17" fill="#ffffff"/><rect x="698" y="693" width="51" height="1" fill="#696969"/><rect x="748" y="677" width="1" height="17" fill="#696969"/><rect x="699" y="692" width="49" height="1" fill="#a0a0a0"/><rect x="747" y="678" width="1" height="15" fill="#a0a0a0"/><text x="700" y="689.5" font-size="11" fill="#000" text-anchor="start" textLength="36.94134375" lengthAdjust="spacingAndGlyphs">Markers</text><rect x="698" y="694" width="51" height="17" fill="#f0f0f0"/><rect x="698" y="694" width="51" height="1" fill="#696969"/><rect x="698" y="694" width="1" height="17" fill="#696969"/><rect x="699" y="695" width="49" height="1" fill="#a0a0a0"/><rect x="699" y="695" width="1" height="15" fill="#a0a0a0"/><rect x="698" y="710" width="51" height="1" fill="#ffffff"/><rect x="748" y="694" width="1" height="17" fill="#ffffff"/><text x="700" y="706.5" font-size="11" fill="#000" text-anchor="start" textLength="18.765656250000003" lengthAdjust="spacingAndGlyphs">Live</text><rect x="698" y="711" width="51" height="17" fill="#f0f0f0"/><rect x="698" y="711" width="51" height="1" fill="#ffffff"/><rect x="698" y="711" width="1" height="17" fill="#ffffff"/><rect x="698" y="727" width="51" height="1" fill="#696969"/><rect x="748" y="711" width="1" height="17" fill="#696969"/><rect x="699" y="726" width="49" height="1" fill="#a0a0a0"/><rect x="747" y="712" width="1" height="15" fill="#a0a0a0"/><text x="700" y="723.5" font-size="11" fill="#000" text-anchor="start" textLength="21.033984375000003" lengthAdjust="spacingAndGlyphs">Print</text><rect x="698" y="728" width="51" height="17" fill="#f0f0f0"/><rect x="698" y="728" width="51" height="1" fill="#ffffff"/><rect x="698" y="728" width="1" height="17" fill="#ffffff"/><rect x="698" y="744" width="51" height="1" fill="#696969"/><rect x="748" y="728" width="1" height="17" fill="#696969"/><rect x="699" y="743" width="49" height="1" fill="#a0a0a0"/><rect x="747" y="729" width="1" height="15" fill="#a0a0a0"/><text x="700" y="740.5" font-size="11" fill="#000" text-anchor="start" textLength="37.521140625" lengthAdjust="spacingAndGlyphs">Zoom In</text><rect x="698" y="745" width="51" height="17" fill="#f0f0f0"/><rect x="698" y="745" width="51" height="1" fill="#ffffff"/><rect x="698" y="745" width="1" height="17" fill="#ffffff"/><rect x="698" y="761" width="51" height="1" fill="#696969"/><rect x="748" y="745" width="1" height="17" fill="#696969"/><rect x="699" y="760" width="49" height="1" fill="#a0a0a0"/><rect x="747" y="746" width="1" height="15" fill="#a0a0a0"/><text x="700" y="757.5" font-size="11" fill="#000" text-anchor="start" textLength="45.478453125" lengthAdjust="spacingAndGlyphs">Zoom Out</text><rect x="0" y="804" width="753" height="2" fill="#d8d8d8"/><rect x="753" y="605" width="752" height="199" fill="#a0a0a0"/><rect x="754" y="606" width="750" height="197" fill="#f0f0f0"/><rect x="754" y="606" width="750" height="30" fill="#ffffff"/><rect x="762" y="613" width="15" height="13" fill="#f4f4f4"/><rect x="762.5" y="613.5" width="14" height="12" fill="none" stroke="#a8acb2" stroke-width="1"/><defs><linearGradient id="ig762_613" x1="0" y1="0" x2="0.3" y2="1"><stop offset="0" stop-color="#5b84bd"/><stop offset="1" stop-color="#4aa85a"/></linearGradient></defs><rect x="764" y="616" width="5" height="8" fill="url(#ig762_613)"/><rect x="771" y="616" width="2" height="8" fill="#dedede"/><rect x="774" y="616" width="2" height="3" fill="#7aa8d8"/><rect x="774" y="619" width="2" height="2" fill="#8cc88c"/><rect x="763" y="614" width="13" height="1" fill="#c8ccd2"/><text x="783" y="625" font-size="12" fill="#999999" text-anchor="start" textLength="99.3" lengthAdjust="spacingAndGlyphs">[DHCP] Swirl angle</text><rect x="1385" y="620" width="10" height="1" fill="#808080"/><rect x="1430.5" y="615.5" width="9" height="9" fill="none" stroke="#808080" stroke-width="1"/><path d="M1476 615 L1486 625 M1486 615 L1476 625" stroke="#808080" stroke-width="1" fill="none" shape-rendering="auto"/><rect x="754" y="636" width="167" height="21" fill="#e5e5e5"/><rect x="754.5" y="636.5" width="166" height="20" fill="none" stroke="#acacac" stroke-width="1"/><text x="758" y="651" font-size="12" fill="#000" text-anchor="start" textLength="50" lengthAdjust="spacingAndGlyphs">Swirl angle</text><path d="M909 644.5 L913 648.5 L917 644.5" fill="none" stroke="#333" stroke-width="1"/><rect x="760" y="663" width="73" height="18" fill="#e1e1e1"/><rect x="760.5" y="663.5" width="72" height="17" fill="none" stroke="#adadad" stroke-width="1"/><text x="795.7" y="676" font-size="12" fill="#000" text-anchor="middle" textLength="54" lengthAdjust="spacingAndGlyphs">Save Chart</text><rect x="759.5" y="691.5" width="161" height="107" fill="none" stroke="#dcdcdc" stroke-width="1"/><rect x="765" y="686" width="63" height="10" fill="#f0f0f0"/><text x="768" y="696" font-size="12" fill="#000" text-anchor="start" textLength="56" lengthAdjust="spacingAndGlyphs">Vertical axis</text><circle cx="774.5" cy="709" r="6" fill="#fff" stroke="#333" stroke-width="1" shape-rendering="auto"/><circle cx="774.5" cy="709" r="3.5" fill="#333" shape-rendering="auto"/><text x="784" y="712.5" font-size="12" fill="#000" text-anchor="start" textLength="50" lengthAdjust="spacingAndGlyphs">Auto-scale</text><circle cx="774.5" cy="725" r="6" fill="#fff" stroke="#333" stroke-width="1" shape-rendering="auto"/><text x="784" y="728.5" font-size="12" fill="#000" text-anchor="start" textLength="62" lengthAdjust="spacingAndGlyphs">Custom scale</text><text x="768" y="748" font-size="12" fill="#000" text-anchor="start" textLength="20" lengthAdjust="spacingAndGlyphs">Min:</text><text x="768" y="767" font-size="12" fill="#000" text-anchor="start" textLength="23.4" lengthAdjust="spacingAndGlyphs">Max:</text><rect x="807" y="734" width="42" height="20" fill="#fff"/><rect x="807.5" y="734.5" width="41" height="19" fill="none" stroke="#7a7a7a" stroke-width="1"/><rect x="807" y="753" width="42" height="20" fill="#fff"/><rect x="807.5" y="753.5" width="41" height="19" fill="none" stroke="#7a7a7a" stroke-width="1"/><text x="814" y="748" font-size="12" fill="#000" text-anchor="start" textLength="16.4765625" lengthAdjust="spacingAndGlyphs">-10</text><text x="814" y="767" font-size="12" fill="#000" text-anchor="start" textLength="12.67953125" lengthAdjust="spacingAndGlyphs">10</text><text x="854.5" y="748" font-size="12" fill="#000" text-anchor="start" textLength="33.6" lengthAdjust="spacingAndGlyphs">degree</text><text x="854.5" y="767" font-size="12" fill="#000" text-anchor="start" textLength="33.6" lengthAdjust="spacingAndGlyphs">degree</text><text x="769" y="786.5" font-size="12" fill="#000" text-anchor="start" textLength="54" lengthAdjust="spacingAndGlyphs"># intervals:</text><rect x="828" y="773" width="21" height="20" fill="#fff"/><rect x="828.5" y="773.5" width="20" height="19" fill="none" stroke="#7a7a7a" stroke-width="1"/><text x="832" y="787" font-size="12" fill="#000" text-anchor="start">2</text><rect x="856" y="774" width="34" height="18" fill="#e1e1e1"/><rect x="856.5" y="774.5" width="33" height="17" fill="none" stroke="#adadad" stroke-width="1"/><text x="872.2" y="787.5" font-size="12" fill="#000" text-anchor="middle" textLength="17" lengthAdjust="spacingAndGlyphs">Set</text><rect x="783" y="678" width="5" height="1" fill="#000"/><rect x="784" y="714" width="7" height="1" fill="#000"/><rect x="784" y="730" width="7" height="1" fill="#000"/><rect x="777" y="750" width="2" height="1" fill="#000"/><rect x="783" y="769" width="5" height="1" fill="#000"/><rect x="781" y="788" width="6" height="1" fill="#000"/><rect x="878" y="790" width="4" height="1" fill="#000"/><text x="0" y="0" font-size="12" fill="#000" text-anchor="middle" textLength="98.7" lengthAdjust="spacingAndGlyphs" transform="translate(935.5,720) rotate(-90)">Swirl angle (degree)</text><rect x="1001" y="643" width="448" height="132" fill="#ffffff"/><rect x="1001" y="693" width="447" height="33" fill="#00ff00"/><rect x="997" y="643" width="4" height="1" fill="#000"/><text x="995" y="648" font-size="11" fill="#000" text-anchor="end" textLength="20.979656249999998" lengthAdjust="spacingAndGlyphs">20.0</text><rect x="997" y="676" width="4" height="1" fill="#000"/><text x="995" y="681" font-size="11" fill="#000" text-anchor="end" textLength="20.979656249999998" lengthAdjust="spacingAndGlyphs">10.0</text><rect x="997" y="709" width="4" height="1" fill="#000"/><text x="995" y="714" font-size="11" fill="#000" text-anchor="end" textLength="14.9848125" lengthAdjust="spacingAndGlyphs">0.0</text><rect x="997" y="742" width="4" height="1" fill="#000"/><text x="995" y="747" font-size="11" fill="#000" text-anchor="end" textLength="24.56890625" lengthAdjust="spacingAndGlyphs">-10.0</text><rect x="997" y="775" width="4" height="1" fill="#000"/><text x="995" y="780" font-size="11" fill="#000" text-anchor="end" textLength="24.56890625" lengthAdjust="spacingAndGlyphs">-20.0</text><polyline points="1001.0,709.0 1384.0,709.0 1388.0,713.0 1392.0,709.0 1429.0,709.0" fill="none" stroke="#1c2f6a" stroke-width="1" stroke-linejoin="miter"/><rect x="1001" y="643" width="1" height="137" fill="#000"/><rect x="1001" y="775" width="448" height="1" fill="#000"/><rect x="1224" y="775" width="1" height="5" fill="#000"/><rect x="1448" y="775" width="1" height="5" fill="#000"/><text x="1001.5" y="791" font-size="11" fill="#000" text-anchor="middle" textLength="60" lengthAdjust="spacingAndGlyphs">12:20:52 PM</text><text x="1224.5" y="791" font-size="11" fill="#000" text-anchor="middle" textLength="60" lengthAdjust="spacingAndGlyphs">12:21:52 PM</text><text x="1448.5" y="791" font-size="11" fill="#000" text-anchor="middle" textLength="60" lengthAdjust="spacingAndGlyphs">12:22:52 PM</text><rect x="1450" y="643" width="51" height="17" fill="#f0f0f0"/><rect x="1450" y="643" width="51" height="1" fill="#ffffff"/><rect x="1450" y="643" width="1" height="17" fill="#ffffff"/><rect x="1450" y="659" width="51" height="1" fill="#696969"/><rect x="1500" y="643" width="1" height="17" fill="#696969"/><rect x="1451" y="658" width="49" height="1" fill="#a0a0a0"/><rect x="1499" y="644" width="1" height="15" fill="#a0a0a0"/><text x="1452" y="655.5" font-size="11" fill="#000" text-anchor="start" textLength="45.478453125" lengthAdjust="spacingAndGlyphs">Scrollbars</text><rect x="1450" y="660" width="51" height="17" fill="#f0f0f0"/><rect x="1450" y="660" width="51" height="1" fill="#696969"/><rect x="1450" y="660" width="1" height="17" fill="#696969"/><rect x="1451" y="661" width="49" height="1" fill="#a0a0a0"/><rect x="1451" y="661" width="1" height="15" fill="#a0a0a0"/><rect x="1450" y="676" width="51" height="1" fill="#ffffff"/><rect x="1500" y="660" width="1" height="17" fill="#ffffff"/><text x="1452" y="672.5" font-size="11" fill="#000" text-anchor="start" textLength="34.13390625" lengthAdjust="spacingAndGlyphs">Legend</text><rect x="1450" y="677" width="51" height="17" fill="#f0f0f0"/><rect x="1450" y="677" width="51" height="1" fill="#ffffff"/><rect x="1450" y="677" width="1" height="17" fill="#ffffff"/><rect x="1450" y="693" width="51" height="1" fill="#696969"/><rect x="1500" y="677" width="1" height="17" fill="#696969"/><rect x="1451" y="692" width="49" height="1" fill="#a0a0a0"/><rect x="1499" y="678" width="1" height="15" fill="#a0a0a0"/><text x="1452" y="689.5" font-size="11" fill="#000" text-anchor="start" textLength="36.94134375" lengthAdjust="spacingAndGlyphs">Markers</text><rect x="1450" y="694" width="51" height="17" fill="#f0f0f0"/><rect x="1450" y="694" width="51" height="1" fill="#696969"/><rect x="1450" y="694" width="1" height="17" fill="#696969"/><rect x="1451" y="695" width="49" height="1" fill="#a0a0a0"/><rect x="1451" y="695" width="1" height="15" fill="#a0a0a0"/><rect x="1450" y="710" width="51" height="1" fill="#ffffff"/><rect x="1500" y="694" width="1" height="17" fill="#ffffff"/><text x="1452" y="706.5" font-size="11" fill="#000" text-anchor="start" textLength="18.765656250000003" lengthAdjust="spacingAndGlyphs">Live</text><rect x="1450" y="711" width="51" height="17" fill="#f0f0f0"/><rect x="1450" y="711" width="51" height="1" fill="#ffffff"/><rect x="1450" y="711" width="1" height="17" fill="#ffffff"/><rect x="1450" y="727" width="51" height="1" fill="#696969"/><rect x="1500" y="711" width="1" height="17" fill="#696969"/><rect x="1451" y="726" width="49" height="1" fill="#a0a0a0"/><rect x="1499" y="712" width="1" height="15" fill="#a0a0a0"/><text x="1452" y="723.5" font-size="11" fill="#000" text-anchor="start" textLength="21.033984375000003" lengthAdjust="spacingAndGlyphs">Print</text><rect x="1450" y="728" width="51" height="17" fill="#f0f0f0"/><rect x="1450" y="728" width="51" height="1" fill="#ffffff"/><rect x="1450" y="728" width="1" height="17" fill="#ffffff"/><rect x="1450" y="744" width="51" height="1" fill="#696969"/><rect x="1500" y="728" width="1" height="17" fill="#696969"/><rect x="1451" y="743" width="49" height="1" fill="#a0a0a0"/><rect x="1499" y="729" width="1" height="15" fill="#a0a0a0"/><text x="1452" y="740.5" font-size="11" fill="#000" text-anchor="start" textLength="37.521140625" lengthAdjust="spacingAndGlyphs">Zoom In</text><rect x="1450" y="745" width="51" height="17" fill="#f0f0f0"/><rect x="1450" y="745" width="51" height="1" fill="#ffffff"/><rect x="1450" y="745" width="1" height="17" fill="#ffffff"/><rect x="1450" y="761" width="51" height="1" fill="#696969"/><rect x="1500" y="745" width="1" height="17" fill="#696969"/><rect x="1451" y="760" width="49" height="1" fill="#a0a0a0"/><rect x="1499" y="746" width="1" height="15" fill="#a0a0a0"/><text x="1452" y="757.5" font-size="11" fill="#000" text-anchor="start" textLength="45.478453125" lengthAdjust="spacingAndGlyphs">Zoom Out</text><rect x="753" y="804" width="754" height="2" fill="#d8d8d8"/><rect x="0" y="0" width="752" height="405" fill="#f0f0f0"/><rect x="0.5" y="0.5" width="751" height="404" fill="none" stroke="#1883d7" stroke-width="1"/><rect x="1" y="1" width="750" height="30" fill="#ffffff"/><text x="9" y="20" font-size="12" fill="#000" text-anchor="start" textLength="173" lengthAdjust="spacingAndGlyphs">[DHCP] Meter Monitor (Detailed)</text><path d="M731 10 L741 20 M741 10 L731 20" stroke="#000" stroke-width="1" fill="none"/><defs><linearGradient id="hdr" x1="0" y1="0" x2="0" y2="1"><stop offset="0" stop-color="#ffffff"/><stop offset="1" stop-color="#d7e2ef"/></linearGradient></defs><rect x="12" y="42" width="617" height="31" fill="url(#hdr)"/><rect x="12" y="74" width="617" height="15" fill="#d4d4d4"/><rect x="12" y="73" width="617" height="1" fill="#a9c0dc"/><rect x="85" y="43" width="1" height="30" fill="#a9c0dc"/><rect x="85" y="74" width="1" height="15" fill="#c2c2c2"/><rect x="158" y="43" width="1" height="30" fill="#a9c0dc"/><rect x="158" y="74" width="1" height="15" fill="#c2c2c2"/><rect x="231" y="43" width="1" height="30" fill="#a9c0dc"/><rect x="231" y="74" width="1" height="15" fill="#c2c2c2"/><rect x="320" y="43" width="1" height="30" fill="#a9c0dc"/><rect x="320" y="74" width="1" height="15" fill="#c2c2c2"/><rect x="409" y="43" width="1" height="30" fill="#a9c0dc"/><rect x="409" y="74" width="1" height="15" fill="#c2c2c2"/><rect x="482" y="43" width="1" height="30" fill="#a9c0dc"/><rect x="482" y="74" width="1" height="15" fill="#c2c2c2"/><rect x="555" y="43" width="1" height="30" fill="#a9c0dc"/><rect x="555" y="74" width="1" height="15" fill="#c2c2c2"/><rect x="12.5" y="42.5" width="616" height="47" fill="none" stroke="#646464" stroke-width="1"/><text x="49.0" y="63" font-size="11" fill="#000" text-anchor="middle" textLength="41.6" lengthAdjust="spacingAndGlyphs">Direction</text><text x="82" y="86" font-size="11" fill="#000" text-anchor="end" textLength="39.128890625" lengthAdjust="spacingAndGlyphs">Forward</text><text x="122.0" y="56" font-size="11" fill="#000" text-anchor="middle" textLength="57.930218749999995" lengthAdjust="spacingAndGlyphs">Avg Velocity</text><text x="122.0" y="69" font-size="11" fill="#000" text-anchor="middle" textLength="14.2286875" lengthAdjust="spacingAndGlyphs">ft/s</text><text x="155" y="86" font-size="11" fill="#000" text-anchor="end" textLength="32.632921875" lengthAdjust="spacingAndGlyphs">25.047</text><text x="195.0" y="56" font-size="11" fill="#000" text-anchor="middle" textLength="43.692437500000004" lengthAdjust="spacingAndGlyphs">Avg SOS</text><text x="195.0" y="69" font-size="11" fill="#000" text-anchor="middle" textLength="14.2286875" lengthAdjust="spacingAndGlyphs">ft/s</text><text x="228" y="86" font-size="11" fill="#000" text-anchor="end" textLength="38.566593749999996" lengthAdjust="spacingAndGlyphs">1383.39</text><text x="276.0" y="56" font-size="11" fill="#000" text-anchor="middle" textLength="74.71121874999999" lengthAdjust="spacingAndGlyphs">Q (uncorrected)</text><text x="276.0" y="69" font-size="11" fill="#000" text-anchor="middle" textLength="32.029703125000005" lengthAdjust="spacingAndGlyphs">ft3/day</text><text x="317" y="86" font-size="11" fill="#000" text-anchor="end" textLength="50.4339375" lengthAdjust="spacingAndGlyphs">3796821.8</text><text x="365.0" y="56" font-size="11" fill="#000" text-anchor="middle" textLength="62.84387499999999" lengthAdjust="spacingAndGlyphs">Q (corrected)</text><text x="365.0" y="69" font-size="11" fill="#000" text-anchor="middle" textLength="32.029703125000005" lengthAdjust="spacingAndGlyphs">ft3/day</text><text x="406" y="86" font-size="11" fill="#000" text-anchor="end" textLength="62.30128125" lengthAdjust="spacingAndGlyphs">254010048.0</text><text x="446.0" y="56" font-size="11" fill="#000" text-anchor="middle" textLength="40.906718749999996" lengthAdjust="spacingAndGlyphs">Perform.</text><text x="446.0" y="69" font-size="11" fill="#000" text-anchor="middle" textLength="9.4878125" lengthAdjust="spacingAndGlyphs">%</text><text x="479" y="86" font-size="11" fill="#000" text-anchor="end" textLength="26.69925" lengthAdjust="spacingAndGlyphs">100.0</text><text x="519.0" y="56" font-size="11" fill="#000" text-anchor="middle" textLength="59.89446875" lengthAdjust="spacingAndGlyphs">Temperature</text><text x="519.0" y="69" font-size="11" fill="#000" text-anchor="middle" textLength="6.5171874999999995" lengthAdjust="spacingAndGlyphs">F</text><text x="552" y="86" font-size="11" fill="#000" text-anchor="end" textLength="55.753781249999996" lengthAdjust="spacingAndGlyphs">Fixed 50.00</text><text x="592.0" y="56" font-size="11" fill="#000" text-anchor="middle" textLength="42.693640625" lengthAdjust="spacingAndGlyphs">Pressure</text><text x="592.0" y="69" font-size="11" fill="#000" text-anchor="middle" textLength="19.572781250000002" lengthAdjust="spacingAndGlyphs">psig</text><text x="625" y="86" font-size="11" fill="#000" text-anchor="end" textLength="55.753781249999996" lengthAdjust="spacingAndGlyphs">Fixed 800.0</text><rect x="659" y="44" width="13" height="13" fill="#00ff00"/><rect x="659" y="44" width="13" height="1" fill="#ffffff"/><rect x="659" y="44" width="1" height="13" fill="#ffffff"/><rect x="659" y="56" width="13" height="1" fill="#808080"/><rect x="671" y="44" width="1" height="13" fill="#808080"/><rect x="660" y="55" width="11" height="1" fill="#a0a0a0"/><rect x="670" y="45" width="1" height="11" fill="#a0a0a0"/><text x="673.5" y="55" font-size="11" fill="#000" text-anchor="start" textLength="34.4" lengthAdjust="spacingAndGlyphs">System</text><rect x="659" y="63" width="13" height="13" fill="#00ff00"/><rect x="659" y="63" width="13" height="1" fill="#ffffff"/><rect x="659" y="63" width="1" height="13" fill="#ffffff"/><rect x="659" y="75" width="13" height="1" fill="#808080"/><rect x="671" y="63" width="1" height="13" fill="#808080"/><rect x="660" y="74" width="11" height="1" fill="#a0a0a0"/><rect x="670" y="64" width="1" height="11" fill="#a0a0a0"/><text x="673.5" y="74" font-size="11" fill="#000" text-anchor="start" textLength="7.117375" lengthAdjust="spacingAndGlyphs">A</text><rect x="659" y="78" width="13" height="13" fill="#00ff00"/><rect x="659" y="78" width="13" height="1" fill="#ffffff"/><rect x="659" y="78" width="1" height="13" fill="#ffffff"/><rect x="659" y="90" width="13" height="1" fill="#808080"/><rect x="671" y="78" width="1" height="13" fill="#808080"/><rect x="660" y="89" width="11" height="1" fill="#a0a0a0"/><rect x="670" y="79" width="1" height="11" fill="#a0a0a0"/><text x="673.5" y="89" font-size="11" fill="#000" text-anchor="start" textLength="7.117375" lengthAdjust="spacingAndGlyphs">B</text><rect x="659" y="93" width="13" height="13" fill="#00ff00"/><rect x="659" y="93" width="13" height="1" fill="#ffffff"/><rect x="659" y="93" width="1" height="13" fill="#ffffff"/><rect x="659" y="105" width="13" height="1" fill="#808080"/><rect x="671" y="93" width="1" height="13" fill="#808080"/><rect x="660" y="104" width="11" height="1" fill="#a0a0a0"/><rect x="670" y="94" width="1" height="11" fill="#a0a0a0"/><text x="673.5" y="104" font-size="11" fill="#000" text-anchor="start" textLength="7.7054374999999995" lengthAdjust="spacingAndGlyphs">C</text><rect x="659" y="108" width="13" height="13" fill="#00ff00"/><rect x="659" y="108" width="13" height="1" fill="#ffffff"/><rect x="659" y="108" width="1" height="13" fill="#ffffff"/><rect x="659" y="120" width="13" height="1" fill="#808080"/><rect x="671" y="108" width="1" height="13" fill="#808080"/><rect x="660" y="119" width="11" height="1" fill="#a0a0a0"/><rect x="670" y="109" width="1" height="11" fill="#a0a0a0"/><text x="673.5" y="119" font-size="11" fill="#000" text-anchor="start" textLength="7.7054374999999995" lengthAdjust="spacingAndGlyphs">D</text><rect x="659" y="128" width="13" height="13" fill="#00ff00"/><rect x="659" y="128" width="13" height="1" fill="#ffffff"/><rect x="659" y="128" width="1" height="13" fill="#ffffff"/><rect x="659" y="140" width="13" height="1" fill="#808080"/><rect x="671" y="128" width="1" height="13" fill="#808080"/><rect x="660" y="139" width="11" height="1" fill="#a0a0a0"/><rect x="670" y="129" width="1" height="11" fill="#a0a0a0"/><text x="673.5" y="139" font-size="11" fill="#000" text-anchor="start" textLength="40.31865625" lengthAdjust="spacingAndGlyphs">Field I/O</text><rect x="659" y="143" width="13" height="13" fill="#00ff00"/><rect x="659" y="143" width="13" height="1" fill="#ffffff"/><rect x="659" y="143" width="1" height="13" fill="#ffffff"/><rect x="659" y="155" width="13" height="1" fill="#808080"/><rect x="671" y="143" width="1" height="13" fill="#808080"/><rect x="660" y="154" width="11" height="1" fill="#a0a0a0"/><rect x="670" y="144" width="1" height="11" fill="#a0a0a0"/><text x="673.5" y="154" font-size="11" fill="#000" text-anchor="start" textLength="30.24278125" lengthAdjust="spacingAndGlyphs">Profile</text><rect x="659" y="158" width="13" height="13" fill="#00ff00"/><rect x="659" y="158" width="13" height="1" fill="#ffffff"/><rect x="659" y="158" width="1" height="13" fill="#ffffff"/><rect x="659" y="170" width="13" height="1" fill="#808080"/><rect x="671" y="158" width="1" height="13" fill="#808080"/><rect x="660" y="169" width="11" height="1" fill="#a0a0a0"/><rect x="670" y="159" width="1" height="11" fill="#a0a0a0"/><text x="673.5" y="169" font-size="11" fill="#000" text-anchor="start" textLength="22.5343125" lengthAdjust="spacingAndGlyphs">SOS</text><rect x="659" y="173" width="13" height="13" fill="#00ff00"/><rect x="659" y="173" width="13" height="1" fill="#ffffff"/><rect x="659" y="173" width="1" height="13" fill="#ffffff"/><rect x="659" y="185" width="13" height="1" fill="#808080"/><rect x="671" y="173" width="1" height="13" fill="#808080"/><rect x="660" y="184" width="11" height="1" fill="#a0a0a0"/><rect x="670" y="174" width="1" height="11" fill="#a0a0a0"/><text x="673.5" y="184" font-size="11" fill="#000" text-anchor="start" textLength="28.4755625" lengthAdjust="spacingAndGlyphs">Liquid</text><rect x="659" y="188" width="13" height="13" fill="#00ff00"/><rect x="659" y="188" width="13" height="1" fill="#ffffff"/><rect x="659" y="188" width="1" height="13" fill="#ffffff"/><rect x="659" y="200" width="13" height="1" fill="#808080"/><rect x="671" y="188" width="1" height="13" fill="#808080"/><rect x="660" y="199" width="11" height="1" fill="#a0a0a0"/><rect x="670" y="189" width="1" height="11" fill="#a0a0a0"/><text x="673.5" y="199" font-size="11" fill="#000" text-anchor="start" textLength="33.604437499999996" lengthAdjust="spacingAndGlyphs">Validity</text><rect x="659" y="203" width="13" height="13" fill="#00ff00"/><rect x="659" y="203" width="13" height="1" fill="#ffffff"/><rect x="659" y="203" width="1" height="13" fill="#ffffff"/><rect x="659" y="215" width="13" height="1" fill="#808080"/><rect x="671" y="203" width="1" height="13" fill="#808080"/><rect x="660" y="214" width="11" height="1" fill="#a0a0a0"/><rect x="670" y="204" width="1" height="11" fill="#a0a0a0"/><text x="673.5" y="214" font-size="11" fill="#000" text-anchor="start" textLength="36.749359375" lengthAdjust="spacingAndGlyphs">Comms</text><rect x="658" y="218" width="73" height="21" fill="#e1e1e1"/><rect x="658.5" y="218.5" width="72" height="20" fill="none" stroke="#adadad" stroke-width="1"/><text x="693.7" y="232" font-size="11" fill="#000" text-anchor="middle" textLength="62.6" lengthAdjust="spacingAndGlyphs">Check Status</text><rect x="20" y="144" width="12" height="13" fill="#f4f4f4"/><rect x="20" y="156" width="12" height="1" fill="#808080"/><rect x="31" y="144" width="1" height="13" fill="#808080"/><rect x="20" y="155" width="11" height="1" fill="#c0c0c0"/><rect x="32" y="144" width="12" height="13" fill="#f4f4f4"/><rect x="32" y="156" width="12" height="1" fill="#808080"/><rect x="43" y="144" width="1" height="13" fill="#808080"/><rect x="32" y="155" width="11" height="1" fill="#c0c0c0"/><path d="M24 150.5 L27 147.5 L27 153.5 Z" fill="#000"/><path d="M40 150.5 L37 147.5 L37 153.5 Z" fill="#000"/><text x="45" y="155" font-size="11" fill="#000" text-anchor="start" textLength="86.561890625" lengthAdjust="spacingAndGlyphs">Flow Velocity (ft/s)</text><rect x="20" y="158" width="1" height="73" fill="#000"/><rect x="20" y="159" width="50" height="14" fill="#00ff00"/><rect x="20.5" y="159.5" width="49" height="13" fill="none" stroke="#808080" stroke-width="1"/><text x="12" y="171" font-size="11" fill="#000" text-anchor="start" textLength="7.117375" lengthAdjust="spacingAndGlyphs">A</text><text x="72" y="171" font-size="11" fill="#000" text-anchor="start" textLength="20.765578124999998" lengthAdjust="spacingAndGlyphs">22.7</text><rect x="20" y="178" width="64" height="14" fill="#00ff00"/><rect x="20.5" y="178.5" width="63" height="13" fill="none" stroke="#808080" stroke-width="1"/><text x="12" y="190" font-size="11" fill="#000" text-anchor="start" textLength="7.117375" lengthAdjust="spacingAndGlyphs">B</text><text x="86" y="190" font-size="11" fill="#000" text-anchor="start" textLength="20.765578124999998" lengthAdjust="spacingAndGlyphs">26.2</text><rect x="20" y="197" width="63" height="14" fill="#00ff00"/><rect x="20.5" y="197.5" width="62" height="13" fill="none" stroke="#808080" stroke-width="1"/><text x="12" y="209" font-size="11" fill="#000" text-anchor="start" textLength="7.7054374999999995" lengthAdjust="spacingAndGlyphs">C</text><text x="85" y="209" font-size="11" fill="#000" text-anchor="start" textLength="20.765578124999998" lengthAdjust="spacingAndGlyphs">25.9</text><rect x="20" y="216" width="48" height="14" fill="#00ff00"/><rect x="20.5" y="216.5" width="47" height="13" fill="none" stroke="#808080" stroke-width="1"/><text x="12" y="228" font-size="11" fill="#000" text-anchor="start" textLength="7.7054374999999995" lengthAdjust="spacingAndGlyphs">D</text><text x="70" y="228" font-size="11" fill="#000" text-anchor="start" textLength="20.765578124999998" lengthAdjust="spacingAndGlyphs">22.2</text><rect x="20" y="230" width="120" height="1" fill="#000"/><rect x="20" y="230" width="1" height="3" fill="#000"/><rect x="139" y="230" width="1" height="3" fill="#000"/><text x="21" y="244" font-size="11" fill="#000" text-anchor="start" textLength="20.765578124999998" lengthAdjust="spacingAndGlyphs">10.0</text><text x="139" y="244" font-size="11" fill="#000" text-anchor="end" textLength="20.765578124999998" lengthAdjust="spacingAndGlyphs">40.0</text><rect x="176" y="144" width="12" height="13" fill="#f4f4f4"/><rect x="176" y="156" width="12" height="1" fill="#808080"/><rect x="187" y="144" width="1" height="13" fill="#808080"/><rect x="176" y="155" width="11" height="1" fill="#c0c0c0"/><rect x="188" y="144" width="12" height="13" fill="#f4f4f4"/><rect x="188" y="156" width="12" height="1" fill="#808080"/><rect x="199" y="144" width="1" height="13" fill="#808080"/><rect x="188" y="155" width="11" height="1" fill="#c0c0c0"/><path d="M180 150.5 L183 147.5 L183 153.5 Z" fill="#000"/><path d="M196 150.5 L193 147.5 L193 153.5 Z" fill="#000"/><text x="201" y="155" font-size="11" fill="#000" text-anchor="start" textLength="46.832812499999996" lengthAdjust="spacingAndGlyphs">SOS (ft/s)</text><rect x="176" y="158" width="1" height="73" fill="#000"/><rect x="176" y="159" width="34" height="14" fill="#00ff00"/><rect x="176.5" y="159.5" width="33" height="13" fill="none" stroke="#808080" stroke-width="1"/><text x="168" y="171" font-size="11" fill="#000" text-anchor="start" textLength="7.117375" lengthAdjust="spacingAndGlyphs">A</text><text x="212" y="171" font-size="11" fill="#000" text-anchor="start" textLength="38.566593749999996" lengthAdjust="spacingAndGlyphs">1383.77</text><rect x="176" y="178" width="19" height="14" fill="#00ff00"/><rect x="176.5" y="178.5" width="18" height="13" fill="none" stroke="#808080" stroke-width="1"/><text x="168" y="190" font-size="11" fill="#000" text-anchor="start" textLength="7.117375" lengthAdjust="spacingAndGlyphs">B</text><text x="197" y="190" font-size="11" fill="#000" text-anchor="start" textLength="38.566593749999996" lengthAdjust="spacingAndGlyphs">1382.08</text><rect x="176" y="197" width="26" height="14" fill="#00ff00"/><rect x="176.5" y="197.5" width="25" height="13" fill="none" stroke="#808080" stroke-width="1"/><text x="168" y="209" font-size="11" fill="#000" text-anchor="start" textLength="7.7054374999999995" lengthAdjust="spacingAndGlyphs">C</text><text x="204" y="209" font-size="11" fill="#000" text-anchor="start" textLength="38.566593749999996" lengthAdjust="spacingAndGlyphs">1382.94</text><rect x="176" y="216" width="42" height="14" fill="#00ff00"/><rect x="176.5" y="216.5" width="41" height="13" fill="none" stroke="#808080" stroke-width="1"/><text x="168" y="228" font-size="11" fill="#000" text-anchor="start" textLength="7.7054374999999995" lengthAdjust="spacingAndGlyphs">D</text><text x="220" y="228" font-size="11" fill="#000" text-anchor="start" textLength="38.566593749999996" lengthAdjust="spacingAndGlyphs">1384.75</text><rect x="176" y="230" width="90" height="1" fill="#000"/><rect x="176" y="230" width="1" height="3" fill="#000"/><rect x="265" y="230" width="1" height="3" fill="#000"/><text x="177" y="244" font-size="11" fill="#000" text-anchor="start" textLength="38.566593749999996" lengthAdjust="spacingAndGlyphs">1380.00</text><text x="265" y="244" font-size="11" fill="#000" text-anchor="end" textLength="38.566593749999996" lengthAdjust="spacingAndGlyphs">1390.00</text><rect x="332" y="144" width="12" height="13" fill="#f4f4f4"/><rect x="332" y="156" width="12" height="1" fill="#808080"/><rect x="343" y="144" width="1" height="13" fill="#808080"/><rect x="332" y="155" width="11" height="1" fill="#c0c0c0"/><rect x="344" y="144" width="12" height="13" fill="#f4f4f4"/><rect x="344" y="156" width="12" height="1" fill="#808080"/><rect x="355" y="144" width="1" height="13" fill="#808080"/><rect x="344" y="155" width="11" height="1" fill="#c0c0c0"/><path d="M336 150.5 L339 147.5 L339 153.5 Z" fill="#000"/><path d="M352 150.5 L349 147.5 L349 153.5 Z" fill="#000"/><text x="357" y="155" font-size="11" fill="#000" text-anchor="start" textLength="45.658203125" lengthAdjust="spacingAndGlyphs">Gain (dB)</text><rect x="332" y="158" width="1" height="73" fill="#000"/><rect x="332" y="159" width="21" height="14" fill="#00ff00"/><rect x="332.5" y="159.5" width="20" height="13" fill="none" stroke="#808080" stroke-width="1"/><text x="324" y="171" font-size="11" fill="#000" text-anchor="start" textLength="7.117375" lengthAdjust="spacingAndGlyphs">A</text><text x="355" y="171" font-size="11" fill="#000" text-anchor="start" textLength="20.765578124999998" lengthAdjust="spacingAndGlyphs">40.7</text><rect x="332" y="178" width="26" height="14" fill="#00ff00"/><rect x="332.5" y="178.5" width="25" height="13" fill="none" stroke="#808080" stroke-width="1"/><text x="324" y="190" font-size="11" fill="#000" text-anchor="start" textLength="7.117375" lengthAdjust="spacingAndGlyphs">B</text><text x="360" y="190" font-size="11" fill="#000" text-anchor="start" textLength="20.765578124999998" lengthAdjust="spacingAndGlyphs">43.7</text><rect x="332" y="197" width="26" height="14" fill="#00ff00"/><rect x="332.5" y="197.5" width="25" height="13" fill="none" stroke="#808080" stroke-width="1"/><text x="324" y="209" font-size="11" fill="#000" text-anchor="start" textLength="7.7054374999999995" lengthAdjust="spacingAndGlyphs">C</text><text x="360" y="209" font-size="11" fill="#000" text-anchor="start" textLength="20.765578124999998" lengthAdjust="spacingAndGlyphs">43.9</text><rect x="332" y="216" width="24" height="14" fill="#00ff00"/><rect x="332.5" y="216.5" width="23" height="13" fill="none" stroke="#808080" stroke-width="1"/><text x="324" y="228" font-size="11" fill="#000" text-anchor="start" textLength="7.7054374999999995" lengthAdjust="spacingAndGlyphs">D</text><text x="358" y="228" font-size="11" fill="#000" text-anchor="start" textLength="20.765578124999998" lengthAdjust="spacingAndGlyphs">42.6</text><rect x="332" y="230" width="110" height="1" fill="#000"/><rect x="332" y="230" width="1" height="3" fill="#000"/><rect x="351" y="230" width="1" height="3" fill="#000"/><rect x="368" y="230" width="1" height="3" fill="#000"/><rect x="387" y="230" width="1" height="3" fill="#000"/><rect x="406" y="230" width="1" height="3" fill="#000"/><rect x="424" y="230" width="1" height="3" fill="#000"/><rect x="441" y="230" width="1" height="3" fill="#000"/><text x="333" y="244" font-size="11" fill="#000" text-anchor="start" textLength="20.765578124999998" lengthAdjust="spacingAndGlyphs">28.0</text><text x="441" y="244" font-size="11" fill="#000" text-anchor="end" textLength="20.765578124999998" lengthAdjust="spacingAndGlyphs">94.0</text><rect x="488" y="144" width="12" height="13" fill="#f4f4f4"/><rect x="488" y="156" width="12" height="1" fill="#808080"/><rect x="499" y="144" width="1" height="13" fill="#808080"/><rect x="488" y="155" width="11" height="1" fill="#c0c0c0"/><rect x="500" y="144" width="12" height="13" fill="#f4f4f4"/><rect x="500" y="156" width="12" height="1" fill="#808080"/><rect x="511" y="144" width="1" height="13" fill="#808080"/><rect x="500" y="155" width="11" height="1" fill="#c0c0c0"/><path d="M492 150.5 L495 147.5 L495 153.5 Z" fill="#000"/><path d="M508 150.5 L505 147.5 L505 153.5 Z" fill="#000"/><text x="513" y="155" font-size="11" fill="#000" text-anchor="start" textLength="92" lengthAdjust="spacingAndGlyphs">Upstream SNR (dB)</text><rect x="488" y="158" width="1" height="73" fill="#000"/><rect x="488" y="159" width="99" height="14" fill="#00ff00"/><rect x="488.5" y="159.5" width="98" height="13" fill="none" stroke="#808080" stroke-width="1"/><text x="480" y="171" font-size="11" fill="#000" text-anchor="start" textLength="7.117375" lengthAdjust="spacingAndGlyphs">A</text><text x="589" y="171" font-size="11" fill="#000" text-anchor="start" textLength="11.86734375" lengthAdjust="spacingAndGlyphs">51</text><rect x="488" y="178" width="99" height="14" fill="#00ff00"/><rect x="488.5" y="178.5" width="98" height="13" fill="none" stroke="#808080" stroke-width="1"/><text x="480" y="190" font-size="11" fill="#000" text-anchor="start" textLength="7.117375" lengthAdjust="spacingAndGlyphs">B</text><text x="589" y="190" font-size="11" fill="#000" text-anchor="start" textLength="11.86734375" lengthAdjust="spacingAndGlyphs">54</text><rect x="488" y="197" width="99" height="14" fill="#00ff00"/><rect x="488.5" y="197.5" width="98" height="13" fill="none" stroke="#808080" stroke-width="1"/><text x="480" y="209" font-size="11" fill="#000" text-anchor="start" textLength="7.7054374999999995" lengthAdjust="spacingAndGlyphs">C</text><text x="589" y="209" font-size="11" fill="#000" text-anchor="start" textLength="11.86734375" lengthAdjust="spacingAndGlyphs">52</text><rect x="488" y="216" width="99" height="14" fill="#00ff00"/><rect x="488.5" y="216.5" width="98" height="13" fill="none" stroke="#808080" stroke-width="1"/><text x="480" y="228" font-size="11" fill="#000" text-anchor="start" textLength="7.7054374999999995" lengthAdjust="spacingAndGlyphs">D</text><text x="589" y="228" font-size="11" fill="#000" text-anchor="start" textLength="11.86734375" lengthAdjust="spacingAndGlyphs">53</text><rect x="488" y="230" width="100" height="1" fill="#000"/><rect x="488" y="230" width="1" height="3" fill="#000"/><rect x="514" y="230" width="1" height="3" fill="#000"/><rect x="538" y="230" width="1" height="3" fill="#000"/><rect x="563" y="230" width="1" height="3" fill="#000"/><rect x="587" y="230" width="1" height="3" fill="#000"/><text x="489" y="244" font-size="11" fill="#000" text-anchor="start" textLength="5.933671875" lengthAdjust="spacingAndGlyphs">0</text><text x="587" y="244" font-size="11" fill="#000" text-anchor="end" textLength="11.86734375" lengthAdjust="spacingAndGlyphs">20</text><rect x="13" y="256" width="73" height="21" fill="#e1e1e1"/><rect x="13.5" y="256.5" width="72" height="20" fill="none" stroke="#adadad" stroke-width="1"/><text x="48.7" y="270.5" font-size="11" fill="#000" text-anchor="middle" textLength="53.7" lengthAdjust="spacingAndGlyphs">Meter Data</text><rect x="92" y="256" width="64" height="21" fill="#e1e1e1"/><rect x="92.5" y="256.5" width="63" height="20" fill="none" stroke="#adadad" stroke-width="1"/><text x="123.2" y="270.5" font-size="11" fill="#000" text-anchor="middle" textLength="47.4" lengthAdjust="spacingAndGlyphs">Gas Comp</text><rect x="163" y="256" width="64" height="21" fill="#e1e1e1"/><rect x="163.5" y="256.5" width="63" height="20" fill="none" stroke="#adadad" stroke-width="1"/><text x="194.2" y="270.5" font-size="11" fill="#000" text-anchor="middle" textLength="39" lengthAdjust="spacingAndGlyphs">Baseline</text><text x="277" y="270.5" font-size="11" fill="#000" text-anchor="start" textLength="53.357578124999996" lengthAdjust="spacingAndGlyphs">Meter time:</text><rect x="336" y="257" width="120" height="20" fill="#ffff00"/><rect x="336.5" y="257.5" width="119" height="19" fill="none" stroke="#7a7a7a" stroke-width="1"/><text x="341" y="270.5" font-size="11" fill="#000" text-anchor="start" textLength="96.098203125" lengthAdjust="spacingAndGlyphs">8/12/2019 12:22 PM</text><rect x="461" y="256" width="34" height="21" fill="#e1e1e1"/><rect x="461.5" y="256.5" width="33" height="20" fill="none" stroke="#adadad" stroke-width="1"/><text x="477.2" y="270.5" font-size="11" fill="#000" text-anchor="middle">Set</text><text x="524" y="270.5" font-size="11" fill="#000" text-anchor="start" textLength="71.16465625" lengthAdjust="spacingAndGlyphs">Collection rate:</text><rect x="648" y="255" width="92" height="21" fill="#e1e1e1"/><rect x="648.5" y="255.5" width="91" height="20" fill="none" stroke="#adadad" stroke-width="1"/><text x="652" y="269.5" font-size="11" fill="#000" text-anchor="start" textLength="52.5" lengthAdjust="spacingAndGlyphs">Best speed</text><path d="M726.5 263.5 L730.5 267.5 L734.5 263.5" fill="none" stroke="#333" shape-rendering="auto"/><text x="524" y="295.5" font-size="11" fill="#000" text-anchor="start" textLength="45.658203125" lengthAdjust="spacingAndGlyphs">Run time:</text><rect x="648" y="280" width="60" height="20" fill="#dcdcdc"/><rect x="648.5" y="280.5" width="59" height="19" fill="none" stroke="#7a7a7a" stroke-width="1"/><rect x="649.5" y="281.5" width="57" height="17" fill="none" stroke="#ffffff" stroke-width="1"/><text x="654" y="294.5" font-size="11" fill="#000" text-anchor="start" textLength="38.2" lengthAdjust="spacingAndGlyphs">0:13:54</text><text x="524" y="319.5" font-size="11" fill="#000" text-anchor="start" textLength="72.93642187500001" lengthAdjust="spacingAndGlyphs">Horizontal axis:</text><rect x="648" y="304" width="83" height="21" fill="#e1e1e1"/><rect x="648.5" y="304.5" width="82" height="20" fill="none" stroke="#adadad" stroke-width="1"/><text x="652" y="318.5" font-size="11" fill="#000" text-anchor="start" textLength="44.8" lengthAdjust="spacingAndGlyphs">2 minutes</text><path d="M718 312.5 L722 316.5 L726 312.5" fill="none" stroke="#333" shape-rendering="auto"/><rect x="524" y="351" width="67" height="21" fill="#e1e1e1"/><rect x="524.5" y="351.5" width="66" height="20" fill="none" stroke="#adadad" stroke-width="1"/><text x="556.7" y="366" font-size="11" fill="#000" text-anchor="middle">Add Chart</text><rect x="598" y="351" width="67" height="21" fill="#e1e1e1"/><rect x="598.5" y="351.5" width="66" height="20" fill="none" stroke="#adadad" stroke-width="1"/><text x="630.7" y="366" font-size="11" fill="#000" text-anchor="middle" textLength="61" lengthAdjust="spacingAndGlyphs">Close Charts</text><rect x="671" y="351" width="67" height="21" fill="#e1e1e1"/><rect x="672.0" y="352.0" width="65" height="19" fill="none" stroke="#0078d7" stroke-width="2"/><text x="703.7" y="366" font-size="11" fill="#000" text-anchor="middle">Close</text><rect x="1" y="381" width="750" height="1" fill="#d8d8d8"/><text x="3" y="398" font-size="12" fill="#000" text-anchor="start" textLength="91" lengthAdjust="spacingAndGlyphs">For Help, press F1</text><rect x="676" y="383" width="75" height="21" fill="#e6e6e6"/><rect x="676" y="383" width="75" height="1" fill="#c8c8c8"/><rect x="676" y="383" width="1" height="21" fill="#d0d0d0"/><rect x="678" y="384" width="4" height="19" fill="#10b020"/><rect x="987" y="604" width="19" height="2" fill="#0c3a6e"/><rect x="1008" y="604" width="10" height="2" fill="#0c3a6e"/><rect x="1030" y="604" width="10" height="2" fill="#0c3a6e"/><rect x="1042" y="604" width="20" height="2" fill="#0c3a6e"/><rect x="1064" y="604" width="19" height="2" fill="#0c3a6e"/><rect x="1089" y="604" width="18" height="2" fill="#0c3a6e"/><rect x="1113" y="604" width="19" height="2" fill="#0c3a6e"/><rect x="1137" y="604" width="9" height="2" fill="#0c3a6e"/><rect x="1155" y="604" width="6" height="2" fill="#0c3a6e"/></svg></body></html>
